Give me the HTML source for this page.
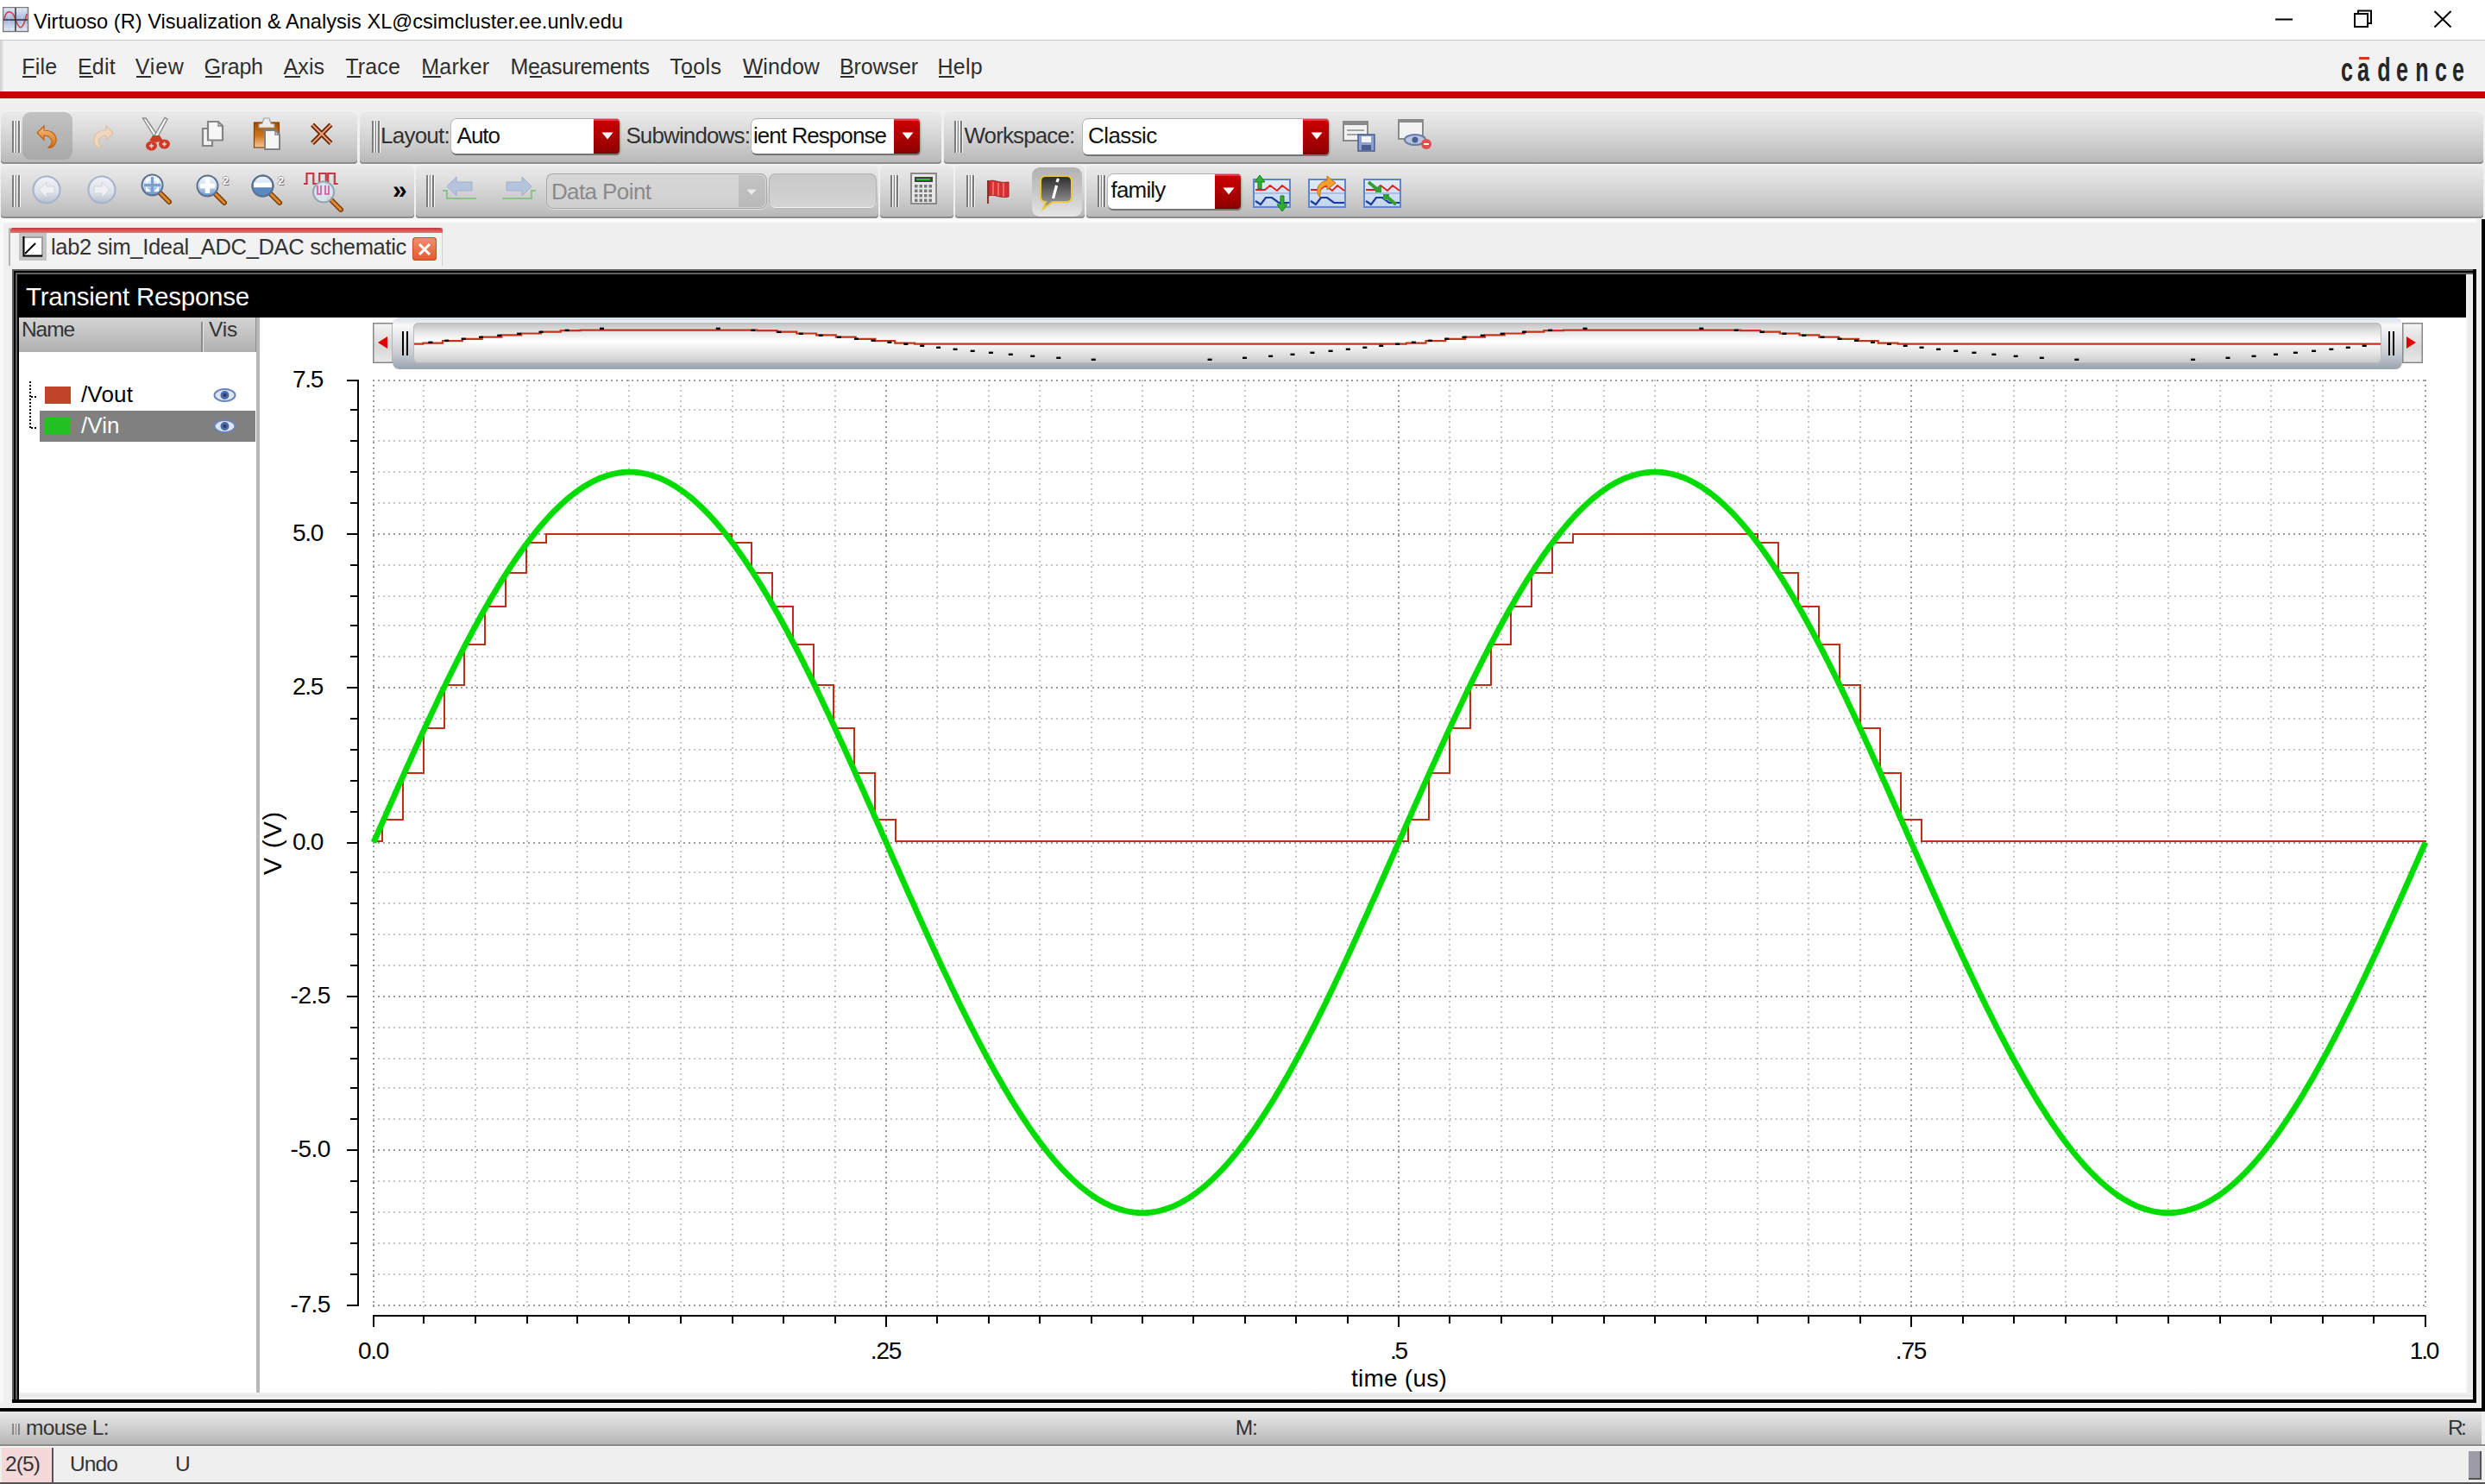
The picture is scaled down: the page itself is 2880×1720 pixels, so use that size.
<!DOCTYPE html><html><head><meta charset="utf-8"><style>
html,body{margin:0;padding:0;width:2880px;height:1720px;overflow:hidden;background:#f0f0f0;position:relative}
.t{position:absolute;font-family:"Liberation Sans",sans-serif;line-height:1;white-space:pre}
</style></head><body>
<div style="position:absolute;left:0px;top:0px;width:2880px;height:46px;background:#fff"></div>
<div style="position:absolute;left:0px;top:46px;width:2880px;height:1px;background:#c9c9c9"></div>
<svg style="position:absolute;left:3px;top:8px" width="31" height="30" viewBox="0 0 31 30">
<defs><linearGradient id="ig" x1="0" y1="0" x2="0" y2="1"><stop offset="0" stop-color="#e8eef8"/><stop offset="0.5" stop-color="#9db4dc"/><stop offset="1" stop-color="#e8eef8"/></linearGradient></defs>
<rect x="0.5" y="0.5" width="29" height="28" fill="url(#ig)" stroke="#7a7a7a" stroke-width="1.5"/>
<g stroke="#c8d2e4" stroke-width="1"><line x1="7.5" y1="1" x2="7.5" y2="28"/><line x1="22.5" y1="1" x2="22.5" y2="28"/><line x1="1" y1="8" x2="29" y2="8"/><line x1="1" y1="21" x2="29" y2="21"/></g>
<path d="M2 14 C4 3, 11 3, 15 14.5 S 23 30, 28 8" fill="none" stroke="#d04040" stroke-width="1.6"/>
<line x1="15" y1="1" x2="15" y2="28" stroke="#333" stroke-width="1.5"/><line x1="1" y1="15" x2="29" y2="15" stroke="#333" stroke-width="1.5"/>
</svg>
<div class="t" style="left:39.00px;top:14.32px;font-size:23.6px;letter-spacing:0.011px;color:#000;font-weight:normal;">Virtuoso (R) Visualization &amp; Analysis XL@csimcluster.ee.unlv.edu</div>
<svg style="position:absolute;left:2630px;top:8px" width="220" height="30" viewBox="0 0 220 30">
<line x1="7" y1="14.5" x2="27" y2="14.5" stroke="#000" stroke-width="2"/>
<rect x="99" y="8" width="15" height="15" fill="none" stroke="#000" stroke-width="2"/>
<path d="M103 8 V4.5 H118 V19 H114" fill="none" stroke="#000" stroke-width="2"/>
<path d="M191.5 5 L210.5 23.5 M210.5 5 L191.5 23.5" stroke="#000" stroke-width="2"/>
</svg>
<div style="position:absolute;left:0px;top:47px;width:2880px;height:59px;background:#f2f2f2"></div>
<div style="position:absolute;left:0px;top:47px;width:4px;height:59px;background:linear-gradient(to right,#cfcfcf,#e8e8e8)"></div>
<div class="t" style="left:25.20px;top:64.83px;font-size:25px;letter-spacing:0.226px;color:#2e2e2e;font-weight:normal;">File</div>
<div class="t" style="left:89.90px;top:64.83px;font-size:25px;letter-spacing:0.252px;color:#2e2e2e;font-weight:normal;">Edit</div>
<div class="t" style="left:156.80px;top:64.83px;font-size:25px;letter-spacing:0.787px;color:#2e2e2e;font-weight:normal;">View</div>
<div class="t" style="left:236.50px;top:64.83px;font-size:25px;letter-spacing:-0.257px;color:#2e2e2e;font-weight:normal;">Graph</div>
<div class="t" style="left:328.50px;top:64.83px;font-size:25px;letter-spacing:0.116px;color:#2e2e2e;font-weight:normal;">Axis</div>
<div class="t" style="left:400.20px;top:64.83px;font-size:25px;letter-spacing:0.163px;color:#2e2e2e;font-weight:normal;">Trace</div>
<div class="t" style="left:488.20px;top:64.83px;font-size:25px;letter-spacing:0.234px;color:#2e2e2e;font-weight:normal;">Marker</div>
<div class="t" style="left:591.50px;top:64.83px;font-size:25px;letter-spacing:-0.355px;color:#2e2e2e;font-weight:normal;">Measurements</div>
<div class="t" style="left:776.20px;top:64.83px;font-size:25px;letter-spacing:0.365px;color:#2e2e2e;font-weight:normal;">Tools</div>
<div class="t" style="left:860.70px;top:64.83px;font-size:25px;letter-spacing:0.063px;color:#2e2e2e;font-weight:normal;">Window</div>
<div class="t" style="left:973.00px;top:64.83px;font-size:25px;letter-spacing:-0.098px;color:#2e2e2e;font-weight:normal;">Browser</div>
<div class="t" style="left:1086.40px;top:64.83px;font-size:25px;letter-spacing:0.295px;color:#2e2e2e;font-weight:normal;">Help</div>
<div style="position:absolute;left:26px;top:88px;width:16px;height:2px;background:#2e2e2e"></div>
<div style="position:absolute;left:91.5px;top:88px;width:16px;height:2px;background:#2e2e2e"></div>
<div style="position:absolute;left:158px;top:88px;width:17px;height:2px;background:#2e2e2e"></div>
<div style="position:absolute;left:238px;top:88px;width:18px;height:2px;background:#2e2e2e"></div>
<div style="position:absolute;left:330px;top:88px;width:18px;height:2px;background:#2e2e2e"></div>
<div style="position:absolute;left:402px;top:88px;width:16px;height:2px;background:#2e2e2e"></div>
<div style="position:absolute;left:490px;top:88px;width:21px;height:2px;background:#2e2e2e"></div>
<div style="position:absolute;left:614px;top:88px;width:14px;height:2px;background:#2e2e2e"></div>
<div style="position:absolute;left:792px;top:88px;width:14px;height:2px;background:#2e2e2e"></div>
<div style="position:absolute;left:862px;top:88px;width:22px;height:2px;background:#2e2e2e"></div>
<div style="position:absolute;left:974px;top:88px;width:16px;height:2px;background:#2e2e2e"></div>
<div style="position:absolute;left:1088px;top:88px;width:18px;height:2px;background:#2e2e2e"></div>
<div class="t" style="left:2699.9px;top:61.8px;width:40px;text-align:center;font-size:38px;font-weight:bold;color:#262626;transform:scaleX(0.66)">c</div>
<div class="t" style="left:2719.2px;top:61.8px;width:40px;text-align:center;font-size:38px;font-weight:bold;color:#262626;transform:scaleX(0.66)">a</div>
<div class="t" style="left:2742.7px;top:61.8px;width:40px;text-align:center;font-size:38px;font-weight:bold;color:#262626;transform:scaleX(0.66)">d</div>
<div class="t" style="left:2764.1px;top:61.8px;width:40px;text-align:center;font-size:38px;font-weight:bold;color:#262626;transform:scaleX(0.66)">e</div>
<div class="t" style="left:2787.2px;top:61.8px;width:40px;text-align:center;font-size:38px;font-weight:bold;color:#262626;transform:scaleX(0.66)">n</div>
<div class="t" style="left:2809.2px;top:61.8px;width:40px;text-align:center;font-size:38px;font-weight:bold;color:#262626;transform:scaleX(0.66)">c</div>
<div class="t" style="left:2829.2px;top:61.8px;width:40px;text-align:center;font-size:38px;font-weight:bold;color:#262626;transform:scaleX(0.66)">e</div>
<div style="position:absolute;left:2734px;top:66px;width:12px;height:3px;background:#e03030"></div>
<div style="position:absolute;left:0px;top:106px;width:2880px;height:8px;background:#c80000"></div>
<div style="position:absolute;left:0px;top:114px;width:2880px;height:14px;background:#f0f0f0"></div>
<div style="position:absolute;left:1px;top:128px;width:413px;height:62px;background:linear-gradient(to bottom,#ececec 0%,#dcdcdc 35%,#c6c6c6 75%,#b6b6b6 100%);border-radius:7px 7px 4px 4px;box-shadow:inset 0 -2px 0 #8c8c8c, inset 0 1px 0 #f4f4f4;"></div>
<div style="position:absolute;left:417px;top:128px;width:674px;height:62px;background:linear-gradient(to bottom,#ececec 0%,#dcdcdc 35%,#c6c6c6 75%,#b6b6b6 100%);border-radius:7px 7px 4px 4px;box-shadow:inset 0 -2px 0 #8c8c8c, inset 0 1px 0 #f4f4f4;"></div>
<div style="position:absolute;left:1094px;top:128px;width:1784px;height:62px;background:linear-gradient(to bottom,#ececec 0%,#dcdcdc 35%,#c6c6c6 75%,#b6b6b6 100%);border-radius:7px 7px 4px 4px;box-shadow:inset 0 -2px 0 #8c8c8c, inset 0 1px 0 #f4f4f4;"></div>
<div style="position:absolute;left:1px;top:190px;width:479px;height:63px;background:linear-gradient(to bottom,#ececec 0%,#dcdcdc 35%,#c6c6c6 75%,#b6b6b6 100%);border-radius:7px 7px 4px 4px;box-shadow:inset 0 -2px 0 #8c8c8c, inset 0 1px 0 #f4f4f4;"></div>
<div style="position:absolute;left:482px;top:190px;width:536px;height:63px;background:linear-gradient(to bottom,#ececec 0%,#dcdcdc 35%,#c6c6c6 75%,#b6b6b6 100%);border-radius:7px 7px 4px 4px;box-shadow:inset 0 -2px 0 #8c8c8c, inset 0 1px 0 #f4f4f4;"></div>
<div style="position:absolute;left:1020px;top:190px;width:85px;height:63px;background:linear-gradient(to bottom,#ececec 0%,#dcdcdc 35%,#c6c6c6 75%,#b6b6b6 100%);border-radius:7px 7px 4px 4px;box-shadow:inset 0 -2px 0 #8c8c8c, inset 0 1px 0 #f4f4f4;"></div>
<div style="position:absolute;left:1107px;top:190px;width:150px;height:63px;background:linear-gradient(to bottom,#ececec 0%,#dcdcdc 35%,#c6c6c6 75%,#b6b6b6 100%);border-radius:7px 7px 4px 4px;box-shadow:inset 0 -2px 0 #8c8c8c, inset 0 1px 0 #f4f4f4;"></div>
<div style="position:absolute;left:1259px;top:190px;width:1619px;height:63px;background:linear-gradient(to bottom,#ececec 0%,#dcdcdc 35%,#c6c6c6 75%,#b6b6b6 100%);border-radius:7px 7px 4px 4px;box-shadow:inset 0 -2px 0 #8c8c8c, inset 0 1px 0 #f4f4f4;"></div>
<div style="position:absolute;left:0px;top:253px;width:2880px;height:5px;background:#fbfbfb"></div>
<div style="position:absolute;left:0px;top:258px;width:2880px;height:54px;background:#efefef"></div>
<div style="position:absolute;left:2876px;top:254px;width:4px;height:1382px;background:#000"></div>
<div style="position:absolute;left:14.0px;top:140px;width:1.6px;height:37px;background:#7c7c7c"></div><div style="position:absolute;left:15.6px;top:140px;width:1px;height:37px;background:#fafafa"></div><div style="position:absolute;left:17.5px;top:140px;width:1.6px;height:37px;background:#7c7c7c"></div><div style="position:absolute;left:19.1px;top:140px;width:1px;height:37px;background:#fafafa"></div><div style="position:absolute;left:21.0px;top:140px;width:1.6px;height:37px;background:#7c7c7c"></div><div style="position:absolute;left:22.6px;top:140px;width:1px;height:37px;background:#fafafa"></div>
<div style="position:absolute;left:431.0px;top:140px;width:1.6px;height:37px;background:#7c7c7c"></div><div style="position:absolute;left:432.6px;top:140px;width:1px;height:37px;background:#fafafa"></div><div style="position:absolute;left:434.5px;top:140px;width:1.6px;height:37px;background:#7c7c7c"></div><div style="position:absolute;left:436.1px;top:140px;width:1px;height:37px;background:#fafafa"></div><div style="position:absolute;left:438.0px;top:140px;width:1.6px;height:37px;background:#7c7c7c"></div><div style="position:absolute;left:439.6px;top:140px;width:1px;height:37px;background:#fafafa"></div>
<div style="position:absolute;left:1106.0px;top:140px;width:1.6px;height:37px;background:#7c7c7c"></div><div style="position:absolute;left:1107.6px;top:140px;width:1px;height:37px;background:#fafafa"></div><div style="position:absolute;left:1109.5px;top:140px;width:1.6px;height:37px;background:#7c7c7c"></div><div style="position:absolute;left:1111.1px;top:140px;width:1px;height:37px;background:#fafafa"></div><div style="position:absolute;left:1113.0px;top:140px;width:1.6px;height:37px;background:#7c7c7c"></div><div style="position:absolute;left:1114.6px;top:140px;width:1px;height:37px;background:#fafafa"></div>
<div style="position:absolute;left:14.0px;top:203px;width:1.6px;height:37px;background:#7c7c7c"></div><div style="position:absolute;left:15.6px;top:203px;width:1px;height:37px;background:#fafafa"></div><div style="position:absolute;left:17.5px;top:203px;width:1.6px;height:37px;background:#7c7c7c"></div><div style="position:absolute;left:19.1px;top:203px;width:1px;height:37px;background:#fafafa"></div><div style="position:absolute;left:21.0px;top:203px;width:1.6px;height:37px;background:#7c7c7c"></div><div style="position:absolute;left:22.6px;top:203px;width:1px;height:37px;background:#fafafa"></div>
<div style="position:absolute;left:494.0px;top:203px;width:1.6px;height:37px;background:#7c7c7c"></div><div style="position:absolute;left:495.6px;top:203px;width:1px;height:37px;background:#fafafa"></div><div style="position:absolute;left:497.5px;top:203px;width:1.6px;height:37px;background:#7c7c7c"></div><div style="position:absolute;left:499.1px;top:203px;width:1px;height:37px;background:#fafafa"></div><div style="position:absolute;left:501.0px;top:203px;width:1.6px;height:37px;background:#7c7c7c"></div><div style="position:absolute;left:502.6px;top:203px;width:1px;height:37px;background:#fafafa"></div>
<div style="position:absolute;left:1032.0px;top:203px;width:1.6px;height:37px;background:#7c7c7c"></div><div style="position:absolute;left:1033.6px;top:203px;width:1px;height:37px;background:#fafafa"></div><div style="position:absolute;left:1035.5px;top:203px;width:1.6px;height:37px;background:#7c7c7c"></div><div style="position:absolute;left:1037.1px;top:203px;width:1px;height:37px;background:#fafafa"></div><div style="position:absolute;left:1039.0px;top:203px;width:1.6px;height:37px;background:#7c7c7c"></div><div style="position:absolute;left:1040.6px;top:203px;width:1px;height:37px;background:#fafafa"></div>
<div style="position:absolute;left:1120.0px;top:203px;width:1.6px;height:37px;background:#7c7c7c"></div><div style="position:absolute;left:1121.6px;top:203px;width:1px;height:37px;background:#fafafa"></div><div style="position:absolute;left:1123.5px;top:203px;width:1.6px;height:37px;background:#7c7c7c"></div><div style="position:absolute;left:1125.1px;top:203px;width:1px;height:37px;background:#fafafa"></div><div style="position:absolute;left:1127.0px;top:203px;width:1.6px;height:37px;background:#7c7c7c"></div><div style="position:absolute;left:1128.6px;top:203px;width:1px;height:37px;background:#fafafa"></div>
<div style="position:absolute;left:1272.0px;top:203px;width:1.6px;height:37px;background:#7c7c7c"></div><div style="position:absolute;left:1273.6px;top:203px;width:1px;height:37px;background:#fafafa"></div><div style="position:absolute;left:1275.5px;top:203px;width:1.6px;height:37px;background:#7c7c7c"></div><div style="position:absolute;left:1277.1px;top:203px;width:1px;height:37px;background:#fafafa"></div><div style="position:absolute;left:1279.0px;top:203px;width:1.6px;height:37px;background:#7c7c7c"></div><div style="position:absolute;left:1280.6px;top:203px;width:1px;height:37px;background:#fafafa"></div>
<div style="position:absolute;left:26px;top:130px;width:58px;height:55px;background:linear-gradient(#c2c2c2,#a9a9a9);border-radius:9px;"></div>
<div style="position:absolute;left:1196px;top:194px;width:58px;height:57px;background:linear-gradient(#b2b2b2,#c8c8c8 50%,#e6e6e6);border-radius:9px;"></div>
<svg style="position:absolute;left:40px;top:142px;overflow:visible" width="30" height="32" viewBox="0 0 30 32"><defs><linearGradient id="ug" x1="0" y1="0" x2="0" y2="1"><stop offset="0" stop-color="#f8c080"/><stop offset="1" stop-color="#d06a10"/></linearGradient></defs>
<path d="M3 12 L11 4 L11 9 C20 9 26 14 25 22 C24 27 20 30 16 29 C20 26 21 22 19 19 C17 16 14 15 11 15 L11 20 Z" fill="url(#ug)" stroke="#c06010" stroke-width="1.2"/></svg>
<svg style="position:absolute;left:104px;top:142px;overflow:visible" width="30" height="32" viewBox="0 0 30 32"><path d="M27 12 L19 4 L19 9 C10 9 4 14 5 22 C6 27 10 30 14 29 C10 26 9 22 11 19 C13 16 16 15 19 15 L19 20 Z" fill="#f0d8c0" stroke="#e0c0a0" stroke-width="1.2"/></svg>
<svg style="position:absolute;left:163px;top:135px;overflow:visible" width="36" height="42" viewBox="0 0 36 42"><path d="M2.5 2 L6 2 L21 24 L18 27 Z" fill="#f6f6f6" stroke="#8c8c8c" stroke-width="1.4"/>
<path d="M28 1.5 L31 3 L18 27 L15 24 Z" fill="#f6f6f6" stroke="#8c8c8c" stroke-width="1.4"/>
<path d="M14 22 L22 22 L26 28 L18 30 L10 28 Z" fill="#d03a28"/>
<ellipse cx="12.5" cy="34" rx="6.5" ry="5.5" fill="#d03a28"/><ellipse cx="27.5" cy="32" rx="6.5" ry="5.5" fill="#d03a28"/>
<path d="M12.5 31.5 V36.5 M10 34 H15 M27.5 29.5 V34.5 M25 32 H30" stroke="#e8d8d8" stroke-width="1.6"/></svg>
<svg style="position:absolute;left:232px;top:138px;overflow:visible" width="30" height="36" viewBox="0 0 30 36"><path d="M3 11 H14 V31 H3 Z" fill="#f2f2f2" stroke="#858585" stroke-width="2.2"/>
<path d="M9 3 H21 L26 8 V24.5 H9 Z" fill="#f6f6f6" stroke="#858585" stroke-width="2.2"/><path d="M21 3 V8 H26" fill="none" stroke="#858585" stroke-width="1.5"/></svg>
<svg style="position:absolute;left:292px;top:135px;overflow:visible" width="36" height="42" viewBox="0 0 36 42"><defs><linearGradient id="pg" x1="0" y1="0" x2="0" y2="1"><stop offset="0" stop-color="#a04c00"/><stop offset="0.55" stop-color="#d07a20"/><stop offset="1" stop-color="#f4c89a"/></linearGradient></defs>
<rect x="2.5" y="7" width="29" height="29" fill="url(#pg)" stroke="#8a4000" stroke-width="1.2"/>
<path d="M8 13 H26 V9 L22 8 L20 2 H14 L12 8 L8 9 Z" fill="#ececec" stroke="#a0a0a0" stroke-width="1.2"/>
<path d="M15 16 H27 L32 21 V38 H15 Z" fill="#f6f6f6" stroke="#828282" stroke-width="2"/><path d="M27 16 V21 H32" fill="none" stroke="#828282" stroke-width="1.4"/></svg>
<svg style="position:absolute;left:358px;top:141px;overflow:visible" width="30" height="28" viewBox="0 0 30 28"><path d="M4 3.5 L25.5 25 M25.5 3.5 L4 25" stroke="#6a2200" stroke-width="5.5"/><path d="M4 3.5 L25.5 25 M25.5 3.5 L4 25" stroke="#eaa47a" stroke-width="2"/></svg>
<div style="position:absolute;left:523px;top:138px;width:195px;height:40px;background:#fff;border-radius:6px 4px 4px 6px;box-shadow:0 -1px 0 #b0b0b0, -1px 0 0 #b8b8b8, 0 2px 0 #747474, 1px 1px 2px rgba(0,0,0,.3);"></div><div style="position:absolute;left:688px;top:138px;width:30px;height:40px;background:linear-gradient(#cc0000,#b00000 50%,#940000 92%,#700000);border-radius:0 4px 4px 0;box-shadow:inset 0 2px 0 #d84040;"></div><svg style="position:absolute;left:697px;top:153px;overflow:visible" width="14" height="9" viewBox="0 0 14 9"><path d="M0.5 0.5 H13.5 L7 8.5 Z" fill="#fff"/></svg>
<div style="position:absolute;left:871px;top:138px;width:195px;height:40px;background:#fff;border-radius:6px 4px 4px 6px;box-shadow:0 -1px 0 #b0b0b0, -1px 0 0 #b8b8b8, 0 2px 0 #747474, 1px 1px 2px rgba(0,0,0,.3);"></div><div style="position:absolute;left:1036px;top:138px;width:30px;height:40px;background:linear-gradient(#cc0000,#b00000 50%,#940000 92%,#700000);border-radius:0 4px 4px 0;box-shadow:inset 0 2px 0 #d84040;"></div><svg style="position:absolute;left:1045px;top:153px;overflow:visible" width="14" height="9" viewBox="0 0 14 9"><path d="M0.5 0.5 H13.5 L7 8.5 Z" fill="#fff"/></svg>
<div style="position:absolute;left:1255px;top:138px;width:285px;height:41px;background:#fff;border-radius:6px 4px 4px 6px;box-shadow:0 -1px 0 #b0b0b0, -1px 0 0 #b8b8b8, 0 2px 0 #747474, 1px 1px 2px rgba(0,0,0,.3);"></div><div style="position:absolute;left:1510px;top:138px;width:30px;height:41px;background:linear-gradient(#cc0000,#b00000 50%,#940000 92%,#700000);border-radius:0 4px 4px 0;box-shadow:inset 0 2px 0 #d84040;"></div><svg style="position:absolute;left:1519px;top:153px;overflow:visible" width="14" height="9" viewBox="0 0 14 9"><path d="M0.5 0.5 H13.5 L7 8.5 Z" fill="#fff"/></svg>
<div style="position:absolute;left:1284px;top:202px;width:154px;height:40px;background:#fff;border-radius:6px 4px 4px 6px;box-shadow:0 -1px 0 #b0b0b0, -1px 0 0 #b8b8b8, 0 2px 0 #747474, 1px 1px 2px rgba(0,0,0,.3);"></div><div style="position:absolute;left:1408px;top:202px;width:30px;height:40px;background:linear-gradient(#cc0000,#b00000 50%,#940000 92%,#700000);border-radius:0 4px 4px 0;box-shadow:inset 0 2px 0 #d84040;"></div><svg style="position:absolute;left:1417px;top:217px;overflow:visible" width="14" height="9" viewBox="0 0 14 9"><path d="M0.5 0.5 H13.5 L7 8.5 Z" fill="#fff"/></svg>
<div class="t" style="left:441.00px;top:144.29px;font-size:26px;letter-spacing:-0.757px;color:#303030;font-weight:normal;">Layout:</div>
<div class="t" style="left:529.60px;top:144.29px;font-size:26px;letter-spacing:-1.050px;color:#111;font-weight:normal;">Auto</div>
<div class="t" style="left:725.40px;top:144.29px;font-size:26px;letter-spacing:-0.873px;color:#303030;font-weight:normal;">Subwindows:</div>
<div class="t" style="left:873.00px;top:144.29px;font-size:26px;letter-spacing:-0.941px;color:#111;font-weight:normal;">ient Response</div>
<div class="t" style="left:1117.40px;top:143.99px;font-size:26px;letter-spacing:-0.880px;color:#303030;font-weight:normal;">Workspace:</div>
<div class="t" style="left:1261.00px;top:143.99px;font-size:26px;letter-spacing:-0.585px;color:#111;font-weight:normal;">Classic</div>
<div class="t" style="left:1287.60px;top:207.49px;font-size:26px;letter-spacing:-0.851px;color:#111;font-weight:normal;">family</div>
<svg style="position:absolute;left:1556px;top:140px;overflow:visible" width="40" height="36" viewBox="0 0 40 36"><rect x="1" y="1" width="28" height="22" fill="#f2f2f2" stroke="#8a8a8a" stroke-width="2"/><rect x="1" y="1" width="28" height="4" fill="#8a8a8a"/>
<line x1="5" y1="11" x2="25" y2="11" stroke="#8a8a8a" stroke-width="1.5"/><line x1="5" y1="16" x2="25" y2="16" stroke="#8a8a8a" stroke-width="1.5"/>
<rect x="18" y="16" width="19" height="19" fill="#8aa0d0" stroke="#4a5e90" stroke-width="1.5"/><rect x="22" y="18" width="11" height="7" fill="#f4f4f4"/><rect x="22" y="28" width="11" height="6" fill="#4a5e90"/></svg>
<svg style="position:absolute;left:1620px;top:137px;overflow:visible" width="42" height="40" viewBox="0 0 42 40"><rect x="1" y="2" width="28" height="22" fill="#f2f2f2" stroke="#8a8a8a" stroke-width="2"/><rect x="1" y="1" width="28" height="4" fill="#8a8a8a"/>
<ellipse cx="20" cy="25" rx="12" ry="6" fill="#b8c4dc" stroke="#6a7ca8" stroke-width="2"/><circle cx="20" cy="25" r="3.5" fill="#4a5e90"/>
<circle cx="33" cy="30" r="6" fill="#e05050"/><rect x="30" y="29" width="6" height="2" fill="#fff"/></svg>
<svg style="position:absolute;left:36px;top:202px;overflow:visible" width="36" height="36" viewBox="0 0 36 36"><defs><linearGradient id="cg54" x1="0" y1="0" x2="0" y2="1"><stop offset="0" stop-color="#f0f2f6"/><stop offset="0.6" stop-color="#dde2ea"/><stop offset="1" stop-color="#b4bccc"/></linearGradient></defs>
<circle cx="18" cy="18" r="15.5" fill="url(#cg54)" stroke="#a8b4cc" stroke-width="2.2"/><path transform="translate(18 18)" d="M-9 0 L0 -9 L0 -4 L9 -4 L9 4 L0 4 L0 9 Z" fill="#eef0f4" stroke="#d0d4dc" stroke-width="1"/></svg>
<svg style="position:absolute;left:100px;top:202px;overflow:visible" width="36" height="36" viewBox="0 0 36 36"><defs><linearGradient id="cg118" x1="0" y1="0" x2="0" y2="1"><stop offset="0" stop-color="#f0f2f6"/><stop offset="0.6" stop-color="#dde2ea"/><stop offset="1" stop-color="#b4bccc"/></linearGradient></defs>
<circle cx="18" cy="18" r="15.5" fill="url(#cg118)" stroke="#a8b4cc" stroke-width="2.2"/><path transform="translate(18 18)" d="M9 0 L0 -9 L0 -4 L-9 -4 L-9 4 L0 4 L0 9 Z" fill="#eef0f4" stroke="#d0d4dc" stroke-width="1"/></svg>
<svg style="position:absolute;left:163px;top:201px;overflow:visible" width="44" height="44" viewBox="0 0 44 44"><defs><linearGradient id="mg163" x1="0" y1="0" x2="0" y2="1"><stop offset="0" stop-color="#f4f8fc"/><stop offset="0.5" stop-color="#c8dcf0"/><stop offset="1" stop-color="#6890c4"/></linearGradient></defs>
<line x1="21" y1="21" x2="33" y2="33" stroke="#7a3a08" stroke-width="6" stroke-linecap="round"/><line x1="21" y1="21" x2="33" y2="33" stroke="#e08a30" stroke-width="3" stroke-linecap="round"/>
<circle cx="13.5" cy="13.5" r="12" fill="url(#mg163)" stroke="#5a7090" stroke-width="2"/><path d="M13.5 4 V23 M4 13.5 H23" stroke="#7aa0d0" stroke-width="3"/><path d="M6 6 L12 6 L6 12 Z M21 6 L21 12 L15 6 Z M6 21 L6 15 L12 21 Z M21 21 L15 21 L21 15 Z" fill="#fff"/></svg>
<svg style="position:absolute;left:227px;top:202px;overflow:visible" width="44" height="44" viewBox="0 0 44 44"><defs><linearGradient id="mg227" x1="0" y1="0" x2="0" y2="1"><stop offset="0" stop-color="#f4f8fc"/><stop offset="0.5" stop-color="#c8dcf0"/><stop offset="1" stop-color="#6890c4"/></linearGradient></defs>
<line x1="21" y1="21" x2="33" y2="33" stroke="#7a3a08" stroke-width="6" stroke-linecap="round"/><line x1="21" y1="21" x2="33" y2="33" stroke="#e08a30" stroke-width="3" stroke-linecap="round"/>
<circle cx="13.5" cy="13.5" r="12" fill="url(#mg227)" stroke="#5a7090" stroke-width="2"/><path d="M13.5 5 V22 M5 13.5 H22" stroke="#fff" stroke-width="5.5"/></svg>
<svg style="position:absolute;left:291px;top:202px;overflow:visible" width="44" height="44" viewBox="0 0 44 44"><defs><linearGradient id="mg291" x1="0" y1="0" x2="0" y2="1"><stop offset="0" stop-color="#f4f8fc"/><stop offset="0.5" stop-color="#c8dcf0"/><stop offset="1" stop-color="#6890c4"/></linearGradient></defs>
<line x1="21" y1="21" x2="33" y2="33" stroke="#7a3a08" stroke-width="6" stroke-linecap="round"/><line x1="21" y1="21" x2="33" y2="33" stroke="#e08a30" stroke-width="3" stroke-linecap="round"/>
<circle cx="13.5" cy="13.5" r="12" fill="url(#mg291)" stroke="#5a7090" stroke-width="2"/><path d="M2.5 13.5 A11 11 0 0 0 24.5 13.5 Z" fill="#5a88c0"/><path d="M3 12.5 H24" stroke="#fff" stroke-width="5.5"/><circle cx="13.5" cy="13.5" r="12" fill="none" stroke="#5a7090" stroke-width="2"/></svg>
<div class="t" style="left:258px;top:203px;font-size:13px;font-weight:bold;color:#fff;text-shadow:1px 1px 0 #777,-1px 0 0 #999,0 -1px 0 #999">2</div>
<div class="t" style="left:322px;top:203px;font-size:13px;font-weight:bold;color:#fff;text-shadow:1px 1px 0 #777,-1px 0 0 #999,0 -1px 0 #999">2</div>
<svg style="position:absolute;left:350px;top:198px;overflow:visible" width="50" height="50" viewBox="0 0 50 50"><path d="M2 15 H5.5 V3 H13.3 V15 H20.2 V3 H27.8 V15 H30.2 V3 H37.8 V15 H41.6" fill="none" stroke="#c03848" stroke-width="2.2"/>
<line x1="32" y1="32" x2="45" y2="45" stroke="#7a3a08" stroke-width="6" stroke-linecap="round"/><line x1="32" y1="32" x2="45" y2="45" stroke="#e08a30" stroke-width="3" stroke-linecap="round"/>
<circle cx="25" cy="24.5" r="12" fill="#d8e4ec" fill-opacity="0.9" stroke="#90a4b4" stroke-width="2"/><path d="M18 17 V27 H22 V17 M27 17 V27 H31 V17" fill="none" stroke="#d050a0" stroke-width="1.6"/></svg>
<div class="t" style="left:455.00px;top:204.60px;font-size:30px;letter-spacing:0.000px;color:#000;font-weight:normal;font-weight:bold;">»</div>
<svg style="position:absolute;left:512px;top:202px;overflow:visible" width="46" height="40" viewBox="0 0 46 40"><path d="M1 19 H6 V28 H40" fill="none" stroke="#8cc08c" stroke-width="2"/><path d="M6 14 L17 3 V9 H35 V19 H17 V25 Z" fill="#b4c4dc" stroke="#a0b0cc" stroke-width="1"/></svg>
<svg style="position:absolute;left:576px;top:202px;overflow:visible" width="46" height="40" viewBox="0 0 46 40"><path d="M45 19 H40 V28 H6" fill="none" stroke="#8cc08c" stroke-width="2"/><path d="M40 14 L29 3 V9 H11 V19 H29 V25 Z" fill="#b4c4dc" stroke="#a0b0cc" stroke-width="1"/></svg>
<div style="position:absolute;left:633px;top:201px;width:256px;height:41px;background:linear-gradient(#d8d8d8,#cfcfcf);border-radius:8px;box-shadow:inset 0 0 0 1px #a8a8a8, 0 1px 1px rgba(255,255,255,.6);"></div>
<div style="position:absolute;left:856px;top:203px;width:31px;height:37px;background:linear-gradient(#c4c4c4,#b8b8b8);border-radius:0 7px 7px 0;"></div>
<svg style="position:absolute;left:865px;top:219px;overflow:visible" width="12" height="8" viewBox="0 0 12 8"><path d="M0.5 0.5 H11.5 L6 7 Z" fill="#ececec"/></svg>
<div class="t" style="left:638.90px;top:208.59px;font-size:26px;letter-spacing:-0.591px;color:#8a8a8a;font-weight:normal;">Data Point</div>
<div style="position:absolute;left:891px;top:201px;width:125px;height:41px;background:linear-gradient(#c8c8c8,#d4d4d4);border-radius:8px;box-shadow:inset 0 0 0 1px #b4b4b4, inset 0 -2px 0 #f6f6f6;"></div>
<svg style="position:absolute;left:1055px;top:200px;overflow:visible" width="32" height="38" viewBox="0 0 32 38"><rect x="1" y="1" width="29" height="35" fill="#e8e8e8" stroke="#8a8a8a" stroke-width="2"/><rect x="5" y="5" width="21" height="6" fill="#404040"/><rect x="7" y="7" width="16" height="2" fill="#30c030"/>
<g fill="#7a7a7a"><rect x="5.0" y="14.0" width="3.5" height="3.5"/><rect x="5.0" y="19.5" width="3.5" height="3.5"/><rect x="5.0" y="25.0" width="3.5" height="3.5"/><rect x="5.0" y="30.5" width="3.5" height="3.5"/><rect x="10.5" y="14.0" width="3.5" height="3.5"/><rect x="10.5" y="19.5" width="3.5" height="3.5"/><rect x="10.5" y="25.0" width="3.5" height="3.5"/><rect x="10.5" y="30.5" width="3.5" height="3.5"/><rect x="16.0" y="14.0" width="3.5" height="3.5"/><rect x="16.0" y="19.5" width="3.5" height="3.5"/><rect x="16.0" y="25.0" width="3.5" height="3.5"/><rect x="16.0" y="30.5" width="3.5" height="3.5"/><rect x="21.5" y="14.0" width="3.5" height="3.5"/><rect x="21.5" y="19.5" width="3.5" height="3.5"/><rect x="21.5" y="25.0" width="3.5" height="3.5"/><rect x="21.5" y="30.5" width="3.5" height="3.5"/></g></svg>
<svg style="position:absolute;left:1143px;top:207px;overflow:visible" width="30" height="30" viewBox="0 0 30 30"><path d="M2 2 V29" stroke="#7a3a30" stroke-width="2"/><path d="M3 3 C9 0 14 6 26 4 V21 C14 23 9 17 3 20 Z" fill="#d83030" stroke="#a02020" stroke-width="1"/><path d="M8 4 V19 M14 5 V20 M20 5 V21" stroke="#f08080" stroke-width="1.5"/></svg>
<svg style="position:absolute;left:1204px;top:202px;overflow:visible" width="42" height="44" viewBox="0 0 42 44"><defs><linearGradient id="inf" x1="0" y1="0" x2="0" y2="1"><stop offset="0" stop-color="#2a2a2a"/><stop offset="1" stop-color="#a8a8a8"/></linearGradient></defs>
<path d="M8 2 H32 Q38 2 38 8 V26 Q38 32 32 32 H16 L5 40 L8 32 Q2 32 2 26 V8 Q2 2 8 2 Z" fill="url(#inf)" stroke="#e8c838" stroke-width="2"/>
<path d="M22.5 5 L21 9 M20.5 13 L16.5 28" stroke="#fff" stroke-width="3.2"/></svg>
<svg style="position:absolute;left:1452px;top:203px;overflow:visible" width="46" height="44" viewBox="0 0 46 44"><defs><linearGradient id="gg1452" x1="0" y1="0" x2="0" y2="1"><stop offset="0" stop-color="#e4ecf8"/><stop offset="1" stop-color="#c0d4f0"/></linearGradient></defs>
<rect x="1" y="5" width="42" height="32" fill="url(#gg1452)" stroke="#5a88d0" stroke-width="2"/><line x1="2" y1="21" x2="42" y2="21" stroke="#7aa0e0" stroke-width="1"/>
<path d="M3 30 L9 34 L15 26 L22 26 L30 32 L42 32" fill="none" stroke="#1a3a9a" stroke-width="2.2"/><path d="M3 17 L14 17 L20 12 L28 18 L34 12 L42 18" fill="none" stroke="#e02020" stroke-width="1.8"/><path d="M8 0 L2 8 H6 V16 H10 V8 H14 Z" fill="#30b030" stroke="#108010"/><path d="M34 42 L28 34 H32 V24 H36 V34 H40 Z" fill="#30b030" stroke="#108010"/></svg>
<svg style="position:absolute;left:1516px;top:203px;overflow:visible" width="46" height="44" viewBox="0 0 46 44"><defs><linearGradient id="gg1516" x1="0" y1="0" x2="0" y2="1"><stop offset="0" stop-color="#e4ecf8"/><stop offset="1" stop-color="#c0d4f0"/></linearGradient></defs>
<rect x="1" y="5" width="42" height="32" fill="url(#gg1516)" stroke="#5a88d0" stroke-width="2"/><line x1="2" y1="21" x2="42" y2="21" stroke="#7aa0e0" stroke-width="1"/>
<path d="M3 30 L9 34 L15 26 L22 26 L30 32 L42 32" fill="none" stroke="#1a3a9a" stroke-width="2.2"/><path d="M3 17 L14 17 L20 12 L28 18 L34 12 L42 18" fill="none" stroke="#e02020" stroke-width="1.8"/><path d="M14 26 C8 20 10 8 22 6 V1 L32 9 L22 17 V12 C16 12 13 18 14 26 Z" fill="#f0a030" stroke="#c07010" stroke-width="1"/></svg>
<svg style="position:absolute;left:1580px;top:203px;overflow:visible" width="46" height="44" viewBox="0 0 46 44"><defs><linearGradient id="gg1580" x1="0" y1="0" x2="0" y2="1"><stop offset="0" stop-color="#e4ecf8"/><stop offset="1" stop-color="#c0d4f0"/></linearGradient></defs>
<rect x="1" y="5" width="42" height="32" fill="url(#gg1580)" stroke="#5a88d0" stroke-width="2"/><line x1="2" y1="21" x2="42" y2="21" stroke="#7aa0e0" stroke-width="1"/>
<path d="M3 30 L9 34 L15 26 L22 26 L30 32 L42 32" fill="none" stroke="#1a3a9a" stroke-width="2.2"/><path d="M3 17 L14 17 L20 12 L28 18 L34 12 L42 18" fill="none" stroke="#e02020" stroke-width="1.8"/><path d="M6 8 L18 18 M14 18 H19 V13" stroke="#30a030" stroke-width="4" fill="none"/><path d="M38 34 L26 24 M30 24 H25 V29" stroke="#30a030" stroke-width="4" fill="none"/></svg>
<div style="position:absolute;left:0px;top:254px;width:4px;height:1382px;background:#f8f8f8"></div>
<div style="position:absolute;left:10px;top:264px;width:503px;height:44px;background:#f2f2f2;border-left:2px solid #b4b4b4;border-right:1px solid #d0d0d0;box-sizing:border-box;"></div>
<div style="position:absolute;left:12px;top:264px;width:501px;height:6px;background:linear-gradient(#c03838,#e27878);border-radius:3px 3px 0 0;"></div>
<div style="position:absolute;left:22px;top:270px;width:32px;height:32px;background:#c4c4c4"></div>
<svg style="position:absolute;left:26px;top:274px;overflow:visible" width="24" height="24" viewBox="0 0 24 24"><rect x="1" y="1" width="22" height="22" fill="#fff" stroke="#a0a0a0" stroke-width="2"/><path d="M1.5 0 V22.5 H23" fill="none" stroke="#000" stroke-width="2"/><path d="M3 20 L15 8" stroke="#000" stroke-width="2"/></svg>
<div class="t" style="left:59.00px;top:274.41px;font-size:25.5px;letter-spacing:-0.323px;color:#333;font-weight:normal;">lab2 sim_Ideal_ADC_DAC schematic</div>
<div style="position:absolute;left:478px;top:275px;width:28px;height:27px;background:linear-gradient(#f09070,#e05a30);border-radius:4px;box-shadow:inset 0 0 0 1px #c84a20;"></div>
<svg style="position:absolute;left:484px;top:281px;overflow:visible" width="16" height="16" viewBox="0 0 16 16"><path d="M2 2 L14 14 M14 2 L2 14" stroke="#fff" stroke-width="3"/></svg>
<div style="position:absolute;left:14px;top:312px;width:2856px;height:1314px;background:#000"></div>
<div style="position:absolute;left:14px;top:312px;width:2852px;height:2px;background:#606060"></div>
<div style="position:absolute;left:14px;top:312px;width:2px;height:1310px;background:#606060"></div>
<div style="position:absolute;left:18px;top:316px;width:2848px;height:2px;background:#606060"></div>
<div style="position:absolute;left:18px;top:316px;width:2px;height:1306px;background:#606060"></div>
<div style="position:absolute;left:2858px;top:318px;width:8px;height:1304px;background:linear-gradient(to right,#f4f4f4,#e8e8e8 60%,#f8f8f8)"></div>
<div style="position:absolute;left:22px;top:1614px;width:2844px;height:8px;background:linear-gradient(#f0f0f0,#e8e8e8 60%,#f8f8f8)"></div>
<div style="position:absolute;left:2870px;top:254px;width:6px;height:1378px;background:#f0f0f0"></div>
<div style="position:absolute;left:0px;top:1626px;width:2876px;height:6px;background:#f0f0f0"></div>
<div style="position:absolute;left:0px;top:1632px;width:2880px;height:4px;background:#000"></div>
<div style="position:absolute;left:20px;top:318px;width:2838px;height:50px;background:#000"></div>
<div class="t" style="left:30.00px;top:328.92px;font-size:29.5px;letter-spacing:-0.218px;color:#fff;font-weight:normal;">Transient Response</div>
<div style="position:absolute;left:22px;top:368px;width:2836px;height:1246px;background:#fff"></div>
<div style="position:absolute;left:22px;top:368px;width:276px;height:40px;background:linear-gradient(#d4d4d4,#b0b0b0)"></div>
<div style="position:absolute;left:233px;top:373px;width:2px;height:35px;background:#8a8a8a"></div>
<div style="position:absolute;left:235px;top:373px;width:1px;height:35px;background:#e8e8e8"></div>
<div style="position:absolute;left:296px;top:368px;width:2px;height:40px;background:#909090"></div>
<div style="position:absolute;left:297px;top:368px;width:4px;height:1246px;background:#b8b8b8"></div>
<div class="t" style="left:25.00px;top:370.26px;font-size:24.5px;letter-spacing:-1.090px;color:#333;font-weight:normal;">Name</div>
<div class="t" style="left:242.00px;top:370.26px;font-size:24.5px;letter-spacing:-0.198px;color:#333;font-weight:normal;">Vis</div>
<div style="position:absolute;left:34px;top:442px;width:2px;height:54px;background:repeating-linear-gradient(#000 0 2px,transparent 2px 4px)"></div>
<div style="position:absolute;left:36px;top:459px;width:8px;height:2px;background:repeating-linear-gradient(to right,#000 0 2px,transparent 2px 4px)"></div>
<div style="position:absolute;left:36px;top:495px;width:8px;height:2px;background:repeating-linear-gradient(to right,#000 0 2px,transparent 2px 4px)"></div>
<div style="position:absolute;left:52px;top:448px;width:30px;height:20px;background:#c04428"></div>
<div class="t" style="left:94.00px;top:443.99px;font-size:26px;letter-spacing:0.144px;color:#000;font-weight:normal;">/Vout</div>
<div style="position:absolute;left:46px;top:476px;width:250px;height:36px;background:#808080"></div>
<div style="position:absolute;left:52px;top:484px;width:30px;height:20px;background:#22c022"></div>
<div class="t" style="left:94.00px;top:479.99px;font-size:26px;letter-spacing:0.039px;color:#f4ffff;font-weight:normal;">/Vin</div>
<svg style="position:absolute;left:247px;top:448px;overflow:visible" width="28" height="20" viewBox="0 0 28 20"><ellipse cx="13.5" cy="10" rx="12" ry="7" fill="#dfe6f2" stroke="#6a84b8" stroke-width="2"/><circle cx="13.5" cy="10" r="5" fill="#4a6aa8"/><circle cx="13.5" cy="10" r="2" fill="#2a3a68"/></svg>
<svg style="position:absolute;left:247px;top:484px;overflow:visible" width="28" height="20" viewBox="0 0 28 20"><ellipse cx="13.5" cy="10" rx="12" ry="7" fill="#dfe6f2" stroke="#6a84b8" stroke-width="2"/><circle cx="13.5" cy="10" r="5" fill="#4a6aa8"/><circle cx="13.5" cy="10" r="2" fill="#2a3a68"/></svg>
<svg style="position:absolute;left:0;top:0" width="2880" height="1720" shape-rendering="crispEdges"><line x1="432" y1="475" x2="2813" y2="475" stroke="#c6c6c6" stroke-width="2" stroke-dasharray="2 4"/><line x1="432" y1="511" x2="2813" y2="511" stroke="#c6c6c6" stroke-width="2" stroke-dasharray="2 4"/><line x1="432" y1="547" x2="2813" y2="547" stroke="#c6c6c6" stroke-width="2" stroke-dasharray="2 4"/><line x1="432" y1="583" x2="2813" y2="583" stroke="#c6c6c6" stroke-width="2" stroke-dasharray="2 4"/><line x1="432" y1="655" x2="2813" y2="655" stroke="#c6c6c6" stroke-width="2" stroke-dasharray="2 4"/><line x1="432" y1="691" x2="2813" y2="691" stroke="#c6c6c6" stroke-width="2" stroke-dasharray="2 4"/><line x1="432" y1="725" x2="2813" y2="725" stroke="#c6c6c6" stroke-width="2" stroke-dasharray="2 4"/><line x1="432" y1="761" x2="2813" y2="761" stroke="#c6c6c6" stroke-width="2" stroke-dasharray="2 4"/><line x1="432" y1="833" x2="2813" y2="833" stroke="#c6c6c6" stroke-width="2" stroke-dasharray="2 4"/><line x1="432" y1="869" x2="2813" y2="869" stroke="#c6c6c6" stroke-width="2" stroke-dasharray="2 4"/><line x1="432" y1="905" x2="2813" y2="905" stroke="#c6c6c6" stroke-width="2" stroke-dasharray="2 4"/><line x1="432" y1="941" x2="2813" y2="941" stroke="#c6c6c6" stroke-width="2" stroke-dasharray="2 4"/><line x1="432" y1="1011" x2="2813" y2="1011" stroke="#c6c6c6" stroke-width="2" stroke-dasharray="2 4"/><line x1="432" y1="1047" x2="2813" y2="1047" stroke="#c6c6c6" stroke-width="2" stroke-dasharray="2 4"/><line x1="432" y1="1083" x2="2813" y2="1083" stroke="#c6c6c6" stroke-width="2" stroke-dasharray="2 4"/><line x1="432" y1="1119" x2="2813" y2="1119" stroke="#c6c6c6" stroke-width="2" stroke-dasharray="2 4"/><line x1="432" y1="1191" x2="2813" y2="1191" stroke="#c6c6c6" stroke-width="2" stroke-dasharray="2 4"/><line x1="432" y1="1227" x2="2813" y2="1227" stroke="#c6c6c6" stroke-width="2" stroke-dasharray="2 4"/><line x1="432" y1="1261" x2="2813" y2="1261" stroke="#c6c6c6" stroke-width="2" stroke-dasharray="2 4"/><line x1="432" y1="1297" x2="2813" y2="1297" stroke="#c6c6c6" stroke-width="2" stroke-dasharray="2 4"/><line x1="432" y1="1369" x2="2813" y2="1369" stroke="#c6c6c6" stroke-width="2" stroke-dasharray="2 4"/><line x1="432" y1="1405" x2="2813" y2="1405" stroke="#c6c6c6" stroke-width="2" stroke-dasharray="2 4"/><line x1="432" y1="1441" x2="2813" y2="1441" stroke="#c6c6c6" stroke-width="2" stroke-dasharray="2 4"/><line x1="432" y1="1477" x2="2813" y2="1477" stroke="#c6c6c6" stroke-width="2" stroke-dasharray="2 4"/><line x1="491" y1="440" x2="491" y2="1515" stroke="#c6c6c6" stroke-width="2" stroke-dasharray="2 4"/><line x1="551" y1="440" x2="551" y2="1515" stroke="#c6c6c6" stroke-width="2" stroke-dasharray="2 4"/><line x1="611" y1="440" x2="611" y2="1515" stroke="#c6c6c6" stroke-width="2" stroke-dasharray="2 4"/><line x1="669" y1="440" x2="669" y2="1515" stroke="#c6c6c6" stroke-width="2" stroke-dasharray="2 4"/><line x1="729" y1="440" x2="729" y2="1515" stroke="#c6c6c6" stroke-width="2" stroke-dasharray="2 4"/><line x1="789" y1="440" x2="789" y2="1515" stroke="#c6c6c6" stroke-width="2" stroke-dasharray="2 4"/><line x1="849" y1="440" x2="849" y2="1515" stroke="#c6c6c6" stroke-width="2" stroke-dasharray="2 4"/><line x1="908" y1="440" x2="908" y2="1515" stroke="#c6c6c6" stroke-width="2" stroke-dasharray="2 4"/><line x1="968" y1="440" x2="968" y2="1515" stroke="#c6c6c6" stroke-width="2" stroke-dasharray="2 4"/><line x1="1086" y1="440" x2="1086" y2="1515" stroke="#c6c6c6" stroke-width="2" stroke-dasharray="2 4"/><line x1="1146" y1="440" x2="1146" y2="1515" stroke="#c6c6c6" stroke-width="2" stroke-dasharray="2 4"/><line x1="1205" y1="440" x2="1205" y2="1515" stroke="#c6c6c6" stroke-width="2" stroke-dasharray="2 4"/><line x1="1265" y1="440" x2="1265" y2="1515" stroke="#c6c6c6" stroke-width="2" stroke-dasharray="2 4"/><line x1="1324" y1="440" x2="1324" y2="1515" stroke="#c6c6c6" stroke-width="2" stroke-dasharray="2 4"/><line x1="1383" y1="440" x2="1383" y2="1515" stroke="#c6c6c6" stroke-width="2" stroke-dasharray="2 4"/><line x1="1443" y1="440" x2="1443" y2="1515" stroke="#c6c6c6" stroke-width="2" stroke-dasharray="2 4"/><line x1="1502" y1="440" x2="1502" y2="1515" stroke="#c6c6c6" stroke-width="2" stroke-dasharray="2 4"/><line x1="1562" y1="440" x2="1562" y2="1515" stroke="#c6c6c6" stroke-width="2" stroke-dasharray="2 4"/><line x1="1680" y1="440" x2="1680" y2="1515" stroke="#c6c6c6" stroke-width="2" stroke-dasharray="2 4"/><line x1="1740" y1="440" x2="1740" y2="1515" stroke="#c6c6c6" stroke-width="2" stroke-dasharray="2 4"/><line x1="1799" y1="440" x2="1799" y2="1515" stroke="#c6c6c6" stroke-width="2" stroke-dasharray="2 4"/><line x1="1859" y1="440" x2="1859" y2="1515" stroke="#c6c6c6" stroke-width="2" stroke-dasharray="2 4"/><line x1="1918" y1="440" x2="1918" y2="1515" stroke="#c6c6c6" stroke-width="2" stroke-dasharray="2 4"/><line x1="1977" y1="440" x2="1977" y2="1515" stroke="#c6c6c6" stroke-width="2" stroke-dasharray="2 4"/><line x1="2037" y1="440" x2="2037" y2="1515" stroke="#c6c6c6" stroke-width="2" stroke-dasharray="2 4"/><line x1="2096" y1="440" x2="2096" y2="1515" stroke="#c6c6c6" stroke-width="2" stroke-dasharray="2 4"/><line x1="2156" y1="440" x2="2156" y2="1515" stroke="#c6c6c6" stroke-width="2" stroke-dasharray="2 4"/><line x1="2275" y1="440" x2="2275" y2="1515" stroke="#c6c6c6" stroke-width="2" stroke-dasharray="2 4"/><line x1="2334" y1="440" x2="2334" y2="1515" stroke="#c6c6c6" stroke-width="2" stroke-dasharray="2 4"/><line x1="2394" y1="440" x2="2394" y2="1515" stroke="#c6c6c6" stroke-width="2" stroke-dasharray="2 4"/><line x1="2453" y1="440" x2="2453" y2="1515" stroke="#c6c6c6" stroke-width="2" stroke-dasharray="2 4"/><line x1="2513" y1="440" x2="2513" y2="1515" stroke="#c6c6c6" stroke-width="2" stroke-dasharray="2 4"/><line x1="2573" y1="440" x2="2573" y2="1515" stroke="#c6c6c6" stroke-width="2" stroke-dasharray="2 4"/><line x1="2632" y1="440" x2="2632" y2="1515" stroke="#c6c6c6" stroke-width="2" stroke-dasharray="2 4"/><line x1="2692" y1="440" x2="2692" y2="1515" stroke="#c6c6c6" stroke-width="2" stroke-dasharray="2 4"/><line x1="2751" y1="440" x2="2751" y2="1515" stroke="#c6c6c6" stroke-width="2" stroke-dasharray="2 4"/><line x1="432" y1="441" x2="2813" y2="441" stroke="#9c9c9c" stroke-width="2" stroke-dasharray="2 4"/><line x1="432" y1="619" x2="2813" y2="619" stroke="#9c9c9c" stroke-width="2" stroke-dasharray="2 4"/><line x1="432" y1="797" x2="2813" y2="797" stroke="#9c9c9c" stroke-width="2" stroke-dasharray="2 4"/><line x1="432" y1="977" x2="2813" y2="977" stroke="#9c9c9c" stroke-width="2" stroke-dasharray="2 4"/><line x1="432" y1="1155" x2="2813" y2="1155" stroke="#9c9c9c" stroke-width="2" stroke-dasharray="2 4"/><line x1="432" y1="1333" x2="2813" y2="1333" stroke="#9c9c9c" stroke-width="2" stroke-dasharray="2 4"/><line x1="432" y1="1513" x2="2813" y2="1513" stroke="#9c9c9c" stroke-width="2" stroke-dasharray="2 4"/><line x1="433" y1="440" x2="433" y2="1515" stroke="#9c9c9c" stroke-width="2" stroke-dasharray="2 4"/><line x1="1027" y1="440" x2="1027" y2="1515" stroke="#9c9c9c" stroke-width="2" stroke-dasharray="2 4"/><line x1="1621" y1="440" x2="1621" y2="1515" stroke="#9c9c9c" stroke-width="2" stroke-dasharray="2 4"/><line x1="2215" y1="440" x2="2215" y2="1515" stroke="#9c9c9c" stroke-width="2" stroke-dasharray="2 4"/><line x1="2811" y1="440" x2="2811" y2="1515" stroke="#9c9c9c" stroke-width="2" stroke-dasharray="2 4"/><line x1="415" y1="440" x2="415" y2="1514" stroke="#000" stroke-width="2"/><line x1="402" y1="441" x2="416" y2="441" stroke="#000" stroke-width="2"/><line x1="406" y1="475" x2="416" y2="475" stroke="#000" stroke-width="2"/><line x1="406" y1="511" x2="416" y2="511" stroke="#000" stroke-width="2"/><line x1="406" y1="547" x2="416" y2="547" stroke="#000" stroke-width="2"/><line x1="406" y1="583" x2="416" y2="583" stroke="#000" stroke-width="2"/><line x1="402" y1="619" x2="416" y2="619" stroke="#000" stroke-width="2"/><line x1="406" y1="655" x2="416" y2="655" stroke="#000" stroke-width="2"/><line x1="406" y1="691" x2="416" y2="691" stroke="#000" stroke-width="2"/><line x1="406" y1="725" x2="416" y2="725" stroke="#000" stroke-width="2"/><line x1="406" y1="761" x2="416" y2="761" stroke="#000" stroke-width="2"/><line x1="402" y1="797" x2="416" y2="797" stroke="#000" stroke-width="2"/><line x1="406" y1="833" x2="416" y2="833" stroke="#000" stroke-width="2"/><line x1="406" y1="869" x2="416" y2="869" stroke="#000" stroke-width="2"/><line x1="406" y1="905" x2="416" y2="905" stroke="#000" stroke-width="2"/><line x1="406" y1="941" x2="416" y2="941" stroke="#000" stroke-width="2"/><line x1="402" y1="977" x2="416" y2="977" stroke="#000" stroke-width="2"/><line x1="406" y1="1011" x2="416" y2="1011" stroke="#000" stroke-width="2"/><line x1="406" y1="1047" x2="416" y2="1047" stroke="#000" stroke-width="2"/><line x1="406" y1="1083" x2="416" y2="1083" stroke="#000" stroke-width="2"/><line x1="406" y1="1119" x2="416" y2="1119" stroke="#000" stroke-width="2"/><line x1="402" y1="1155" x2="416" y2="1155" stroke="#000" stroke-width="2"/><line x1="406" y1="1191" x2="416" y2="1191" stroke="#000" stroke-width="2"/><line x1="406" y1="1227" x2="416" y2="1227" stroke="#000" stroke-width="2"/><line x1="406" y1="1261" x2="416" y2="1261" stroke="#000" stroke-width="2"/><line x1="406" y1="1297" x2="416" y2="1297" stroke="#000" stroke-width="2"/><line x1="402" y1="1333" x2="416" y2="1333" stroke="#000" stroke-width="2"/><line x1="406" y1="1369" x2="416" y2="1369" stroke="#000" stroke-width="2"/><line x1="406" y1="1405" x2="416" y2="1405" stroke="#000" stroke-width="2"/><line x1="406" y1="1441" x2="416" y2="1441" stroke="#000" stroke-width="2"/><line x1="406" y1="1477" x2="416" y2="1477" stroke="#000" stroke-width="2"/><line x1="402" y1="1513" x2="416" y2="1513" stroke="#000" stroke-width="2"/><line x1="432" y1="1525" x2="2812" y2="1525" stroke="#000" stroke-width="2"/><line x1="433" y1="1524" x2="433" y2="1538" stroke="#000" stroke-width="2"/><line x1="491" y1="1524" x2="491" y2="1534" stroke="#000" stroke-width="2"/><line x1="551" y1="1524" x2="551" y2="1534" stroke="#000" stroke-width="2"/><line x1="611" y1="1524" x2="611" y2="1534" stroke="#000" stroke-width="2"/><line x1="669" y1="1524" x2="669" y2="1534" stroke="#000" stroke-width="2"/><line x1="729" y1="1524" x2="729" y2="1534" stroke="#000" stroke-width="2"/><line x1="789" y1="1524" x2="789" y2="1534" stroke="#000" stroke-width="2"/><line x1="849" y1="1524" x2="849" y2="1534" stroke="#000" stroke-width="2"/><line x1="908" y1="1524" x2="908" y2="1534" stroke="#000" stroke-width="2"/><line x1="968" y1="1524" x2="968" y2="1534" stroke="#000" stroke-width="2"/><line x1="1027" y1="1524" x2="1027" y2="1538" stroke="#000" stroke-width="2"/><line x1="1086" y1="1524" x2="1086" y2="1534" stroke="#000" stroke-width="2"/><line x1="1146" y1="1524" x2="1146" y2="1534" stroke="#000" stroke-width="2"/><line x1="1205" y1="1524" x2="1205" y2="1534" stroke="#000" stroke-width="2"/><line x1="1265" y1="1524" x2="1265" y2="1534" stroke="#000" stroke-width="2"/><line x1="1324" y1="1524" x2="1324" y2="1534" stroke="#000" stroke-width="2"/><line x1="1383" y1="1524" x2="1383" y2="1534" stroke="#000" stroke-width="2"/><line x1="1443" y1="1524" x2="1443" y2="1534" stroke="#000" stroke-width="2"/><line x1="1502" y1="1524" x2="1502" y2="1534" stroke="#000" stroke-width="2"/><line x1="1562" y1="1524" x2="1562" y2="1534" stroke="#000" stroke-width="2"/><line x1="1621" y1="1524" x2="1621" y2="1538" stroke="#000" stroke-width="2"/><line x1="1680" y1="1524" x2="1680" y2="1534" stroke="#000" stroke-width="2"/><line x1="1740" y1="1524" x2="1740" y2="1534" stroke="#000" stroke-width="2"/><line x1="1799" y1="1524" x2="1799" y2="1534" stroke="#000" stroke-width="2"/><line x1="1859" y1="1524" x2="1859" y2="1534" stroke="#000" stroke-width="2"/><line x1="1918" y1="1524" x2="1918" y2="1534" stroke="#000" stroke-width="2"/><line x1="1977" y1="1524" x2="1977" y2="1534" stroke="#000" stroke-width="2"/><line x1="2037" y1="1524" x2="2037" y2="1534" stroke="#000" stroke-width="2"/><line x1="2096" y1="1524" x2="2096" y2="1534" stroke="#000" stroke-width="2"/><line x1="2156" y1="1524" x2="2156" y2="1534" stroke="#000" stroke-width="2"/><line x1="2215" y1="1524" x2="2215" y2="1538" stroke="#000" stroke-width="2"/><line x1="2275" y1="1524" x2="2275" y2="1534" stroke="#000" stroke-width="2"/><line x1="2334" y1="1524" x2="2334" y2="1534" stroke="#000" stroke-width="2"/><line x1="2394" y1="1524" x2="2394" y2="1534" stroke="#000" stroke-width="2"/><line x1="2453" y1="1524" x2="2453" y2="1534" stroke="#000" stroke-width="2"/><line x1="2513" y1="1524" x2="2513" y2="1534" stroke="#000" stroke-width="2"/><line x1="2573" y1="1524" x2="2573" y2="1534" stroke="#000" stroke-width="2"/><line x1="2632" y1="1524" x2="2632" y2="1534" stroke="#000" stroke-width="2"/><line x1="2692" y1="1524" x2="2692" y2="1534" stroke="#000" stroke-width="2"/><line x1="2751" y1="1524" x2="2751" y2="1534" stroke="#000" stroke-width="2"/><line x1="2811" y1="1524" x2="2811" y2="1538" stroke="#000" stroke-width="2"/><path d="M433 975 L443 975 L443 950 L467 950 L467 896 L491 896 L491 844 L515 844 L515 794 L538 794 L538 747 L562 747 L562 703 L586 703 L586 664 L610 664 L610 629 L633 629 L633 619 L657 619 L657 619 L681 619 L681 619 L705 619 L705 619 L729 619 L729 619 L752 619 L752 619 L776 619 L776 619 L800 619 L800 619 L824 619 L824 619 L848 619 L848 629 L871 629 L871 664 L895 664 L895 703 L919 703 L919 747 L943 747 L943 794 L966 794 L966 844 L990 844 L990 896 L1014 896 L1014 950 L1038 950 L1038 975 L1062 975 L1062 975 L1085 975 L1085 975 L1109 975 L1109 975 L1133 975 L1133 975 L1157 975 L1157 975 L1181 975 L1181 975 L1204 975 L1204 975 L1228 975 L1228 975 L1252 975 L1252 975 L1276 975 L1276 975 L1299 975 L1299 975 L1323 975 L1323 975 L1347 975 L1347 975 L1371 975 L1371 975 L1395 975 L1395 975 L1418 975 L1418 975 L1442 975 L1442 975 L1466 975 L1466 975 L1490 975 L1490 975 L1513 975 L1513 975 L1537 975 L1537 975 L1561 975 L1561 975 L1585 975 L1585 975 L1609 975 L1609 975 L1632 975 L1632 950 L1656 950 L1656 896 L1680 896 L1680 844 L1704 844 L1704 794 L1728 794 L1728 747 L1751 747 L1751 703 L1775 703 L1775 664 L1799 664 L1799 629 L1823 629 L1823 619 L1846 619 L1846 619 L1870 619 L1870 619 L1894 619 L1894 619 L1918 619 L1918 619 L1942 619 L1942 619 L1965 619 L1965 619 L1989 619 L1989 619 L2013 619 L2013 619 L2037 619 L2037 629 L2061 629 L2061 664 L2084 664 L2084 703 L2108 703 L2108 747 L2132 747 L2132 794 L2156 794 L2156 844 L2179 844 L2179 896 L2203 896 L2203 950 L2227 950 L2227 975 L2251 975 L2251 975 L2275 975 L2275 975 L2299 975 L2299 975 L2322 975 L2322 975 L2346 975 L2346 975 L2370 975 L2370 975 L2394 975 L2394 975 L2418 975 L2418 975 L2442 975 L2442 975 L2466 975 L2466 975 L2490 975 L2490 975 L2513 975 L2513 975 L2537 975 L2537 975 L2561 975 L2561 975 L2585 975 L2585 975 L2609 975 L2609 975 L2633 975 L2633 975 L2657 975 L2657 975 L2680 975 L2680 975 L2704 975 L2704 975 L2728 975 L2728 975 L2752 975 L2752 975 L2776 975 L2776 975 L2800 975 L2800 975 L2811 975" fill="none" stroke="#bc3016" stroke-width="2" stroke-linejoin="miter" stroke-linecap="square"/><path d="M433.0 976.4 L434.2 973.7 L435.4 971.0 L436.6 968.3 L437.8 965.6 L438.9 962.9 L440.1 960.2 L441.3 957.5 L442.5 954.8 L443.7 952.1 L444.9 949.4 L446.1 946.8 L447.3 944.1 L448.4 941.4 L449.6 938.7 L450.8 936.0 L452.0 933.3 L453.2 930.6 L454.4 928.0 L455.6 925.3 L456.8 922.6 L457.9 919.9 L459.1 917.2 L460.3 914.6 L461.5 911.9 L462.7 909.2 L463.9 906.6 L465.1 903.9 L466.3 901.3 L467.5 898.6 L468.6 896.0 L469.8 893.3 L471.0 890.7 L472.2 888.0 L473.4 885.4 L474.6 882.8 L475.8 880.1 L477.0 877.5 L478.1 874.9 L479.3 872.3 L480.5 869.6 L481.7 867.0 L482.9 864.4 L484.1 861.8 L485.3 859.2 L486.5 856.6 L487.6 854.0 L488.8 851.5 L490.0 848.9 L491.2 846.3 L492.4 843.7 L493.6 841.2 L494.8 838.6 L496.0 836.1 L497.2 833.5 L498.3 831.0 L499.5 828.4 L500.7 825.9 L501.9 823.4 L503.1 820.9 L504.3 818.4 L505.5 815.9 L506.7 813.4 L507.8 810.9 L509.0 808.4 L510.2 805.9 L511.4 803.4 L512.6 801.0 L513.8 798.5 L515.0 796.1 L516.2 793.6 L517.3 791.2 L518.5 788.7 L519.7 786.3 L520.9 783.9 L522.1 781.5 L523.3 779.1 L524.5 776.7 L525.7 774.3 L526.9 772.0 L528.0 769.6 L529.2 767.2 L530.4 764.9 L531.6 762.5 L532.8 760.2 L534.0 757.9 L535.2 755.6 L536.4 753.2 L537.5 750.9 L538.7 748.7 L539.9 746.4 L541.1 744.1 L542.3 741.8 L543.5 739.6 L544.7 737.3 L545.9 735.1 L547.0 732.9 L548.2 730.7 L549.4 728.4 L550.6 726.3 L551.8 724.1 L553.0 721.9 L554.2 719.7 L555.4 717.6 L556.6 715.4 L557.7 713.3 L558.9 711.2 L560.1 709.0 L561.3 706.9 L562.5 704.8 L563.7 702.8 L564.9 700.7 L566.1 698.6 L567.2 696.6 L568.4 694.5 L569.6 692.5 L570.8 690.5 L572.0 688.5 L573.2 686.5 L574.4 684.5 L575.6 682.5 L576.7 680.6 L577.9 678.6 L579.1 676.7 L580.3 674.8 L581.5 672.8 L582.7 670.9 L583.9 669.0 L585.1 667.2 L586.3 665.3 L587.4 663.5 L588.6 661.6 L589.8 659.8 L591.0 658.0 L592.2 656.2 L593.4 654.4 L594.6 652.6 L595.8 650.8 L596.9 649.1 L598.1 647.3 L599.3 645.6 L600.5 643.9 L601.7 642.2 L602.9 640.5 L604.1 638.8 L605.3 637.2 L606.4 635.5 L607.6 633.9 L608.8 632.3 L610.0 630.7 L611.2 629.1 L612.4 627.5 L613.6 625.9 L614.8 624.4 L616.0 622.9 L617.1 621.3 L618.3 619.8 L619.5 618.3 L620.7 616.8 L621.9 615.4 L623.1 613.9 L624.3 612.5 L625.5 611.1 L626.6 609.7 L627.8 608.3 L629.0 606.9 L630.2 605.5 L631.4 604.2 L632.6 602.8 L633.8 601.5 L635.0 600.2 L636.1 598.9 L637.3 597.6 L638.5 596.4 L639.7 595.1 L640.9 593.9 L642.1 592.7 L643.3 591.5 L644.5 590.3 L645.7 589.1 L646.8 588.0 L648.0 586.8 L649.2 585.7 L650.4 584.6 L651.6 583.5 L652.8 582.4 L654.0 581.3 L655.2 580.3 L656.3 579.3 L657.5 578.2 L658.7 577.2 L659.9 576.3 L661.1 575.3 L662.3 574.3 L663.5 573.4 L664.7 572.5 L665.8 571.6 L667.0 570.7 L668.2 569.8 L669.4 569.0 L670.6 568.1 L671.8 567.3 L673.0 566.5 L674.2 565.7 L675.4 564.9 L676.5 564.1 L677.7 563.4 L678.9 562.7 L680.1 562.0 L681.3 561.3 L682.5 560.6 L683.7 559.9 L684.9 559.3 L686.0 558.6 L687.2 558.0 L688.4 557.4 L689.6 556.9 L690.8 556.3 L692.0 555.7 L693.2 555.2 L694.4 554.7 L695.5 554.2 L696.7 553.7 L697.9 553.3 L699.1 552.8 L700.3 552.4 L701.5 552.0 L702.7 551.6 L703.9 551.2 L705.1 550.8 L706.2 550.5 L707.4 550.2 L708.6 549.8 L709.8 549.5 L711.0 549.3 L712.2 549.0 L713.4 548.8 L714.6 548.5 L715.7 548.3 L716.9 548.1 L718.1 547.9 L719.3 547.8 L720.5 547.6 L721.7 547.5 L722.9 547.4 L724.1 547.3 L725.2 547.2 L726.4 547.2 L727.6 547.1 L728.8 547.1 L730.0 547.1 L731.2 547.1 L732.4 547.1 L733.6 547.2 L734.8 547.2 L735.9 547.3 L737.1 547.4 L738.3 547.5 L739.5 547.6 L740.7 547.8 L741.9 547.9 L743.1 548.1 L744.3 548.3 L745.4 548.5 L746.6 548.8 L747.8 549.0 L749.0 549.3 L750.2 549.5 L751.4 549.8 L752.6 550.2 L753.8 550.5 L754.9 550.8 L756.1 551.2 L757.3 551.6 L758.5 552.0 L759.7 552.4 L760.9 552.8 L762.1 553.3 L763.3 553.7 L764.5 554.2 L765.6 554.7 L766.8 555.2 L768.0 555.7 L769.2 556.3 L770.4 556.9 L771.6 557.4 L772.8 558.0 L774.0 558.6 L775.1 559.3 L776.3 559.9 L777.5 560.6 L778.7 561.3 L779.9 562.0 L781.1 562.7 L782.3 563.4 L783.5 564.1 L784.6 564.9 L785.8 565.7 L787.0 566.5 L788.2 567.3 L789.4 568.1 L790.6 569.0 L791.8 569.8 L793.0 570.7 L794.2 571.6 L795.3 572.5 L796.5 573.4 L797.7 574.3 L798.9 575.3 L800.1 576.3 L801.3 577.2 L802.5 578.2 L803.7 579.3 L804.8 580.3 L806.0 581.3 L807.2 582.4 L808.4 583.5 L809.6 584.6 L810.8 585.7 L812.0 586.8 L813.2 588.0 L814.3 589.1 L815.5 590.3 L816.7 591.5 L817.9 592.7 L819.1 593.9 L820.3 595.1 L821.5 596.4 L822.7 597.6 L823.9 598.9 L825.0 600.2 L826.2 601.5 L827.4 602.8 L828.6 604.2 L829.8 605.5 L831.0 606.9 L832.2 608.3 L833.4 609.7 L834.5 611.1 L835.7 612.5 L836.9 613.9 L838.1 615.4 L839.3 616.8 L840.5 618.3 L841.7 619.8 L842.9 621.3 L844.0 622.9 L845.2 624.4 L846.4 625.9 L847.6 627.5 L848.8 629.1 L850.0 630.7 L851.2 632.3 L852.4 633.9 L853.6 635.5 L854.7 637.2 L855.9 638.8 L857.1 640.5 L858.3 642.2 L859.5 643.9 L860.7 645.6 L861.9 647.3 L863.1 649.1 L864.2 650.8 L865.4 652.6 L866.6 654.4 L867.8 656.2 L869.0 658.0 L870.2 659.8 L871.4 661.6 L872.6 663.5 L873.7 665.3 L874.9 667.2 L876.1 669.0 L877.3 670.9 L878.5 672.8 L879.7 674.8 L880.9 676.7 L882.1 678.6 L883.3 680.6 L884.4 682.5 L885.6 684.5 L886.8 686.5 L888.0 688.5 L889.2 690.5 L890.4 692.5 L891.6 694.5 L892.8 696.6 L893.9 698.6 L895.1 700.7 L896.3 702.8 L897.5 704.8 L898.7 706.9 L899.9 709.0 L901.1 711.2 L902.3 713.3 L903.4 715.4 L904.6 717.6 L905.8 719.7 L907.0 721.9 L908.2 724.1 L909.4 726.3 L910.6 728.4 L911.8 730.7 L913.0 732.9 L914.1 735.1 L915.3 737.3 L916.5 739.6 L917.7 741.8 L918.9 744.1 L920.1 746.4 L921.3 748.7 L922.5 750.9 L923.6 753.2 L924.8 755.6 L926.0 757.9 L927.2 760.2 L928.4 762.5 L929.6 764.9 L930.8 767.2 L932.0 769.6 L933.1 772.0 L934.3 774.3 L935.5 776.7 L936.7 779.1 L937.9 781.5 L939.1 783.9 L940.3 786.3 L941.5 788.7 L942.7 791.2 L943.8 793.6 L945.0 796.1 L946.2 798.5 L947.4 801.0 L948.6 803.4 L949.8 805.9 L951.0 808.4 L952.2 810.9 L953.3 813.4 L954.5 815.9 L955.7 818.4 L956.9 820.9 L958.1 823.4 L959.3 825.9 L960.5 828.4 L961.7 831.0 L962.8 833.5 L964.0 836.1 L965.2 838.6 L966.4 841.2 L967.6 843.7 L968.8 846.3 L970.0 848.9 L971.2 851.5 L972.4 854.0 L973.5 856.6 L974.7 859.2 L975.9 861.8 L977.1 864.4 L978.3 867.0 L979.5 869.6 L980.7 872.3 L981.9 874.9 L983.0 877.5 L984.2 880.1 L985.4 882.8 L986.6 885.4 L987.8 888.0 L989.0 890.7 L990.2 893.3 L991.4 896.0 L992.5 898.6 L993.7 901.3 L994.9 903.9 L996.1 906.6 L997.3 909.2 L998.5 911.9 L999.7 914.6 L1000.9 917.2 L1002.1 919.9 L1003.2 922.6 L1004.4 925.3 L1005.6 928.0 L1006.8 930.6 L1008.0 933.3 L1009.2 936.0 L1010.4 938.7 L1011.6 941.4 L1012.7 944.1 L1013.9 946.8 L1015.1 949.4 L1016.3 952.1 L1017.5 954.8 L1018.7 957.5 L1019.9 960.2 L1021.1 962.9 L1022.2 965.6 L1023.4 968.3 L1024.6 971.0 L1025.8 973.7 L1027.0 976.4 L1028.2 979.1 L1029.4 981.8 L1030.6 984.5 L1031.8 987.2 L1032.9 989.9 L1034.1 992.6 L1035.3 995.3 L1036.5 998.0 L1037.7 1000.7 L1038.9 1003.4 L1040.1 1006.0 L1041.3 1008.7 L1042.4 1011.4 L1043.6 1014.1 L1044.8 1016.8 L1046.0 1019.5 L1047.2 1022.2 L1048.4 1024.8 L1049.6 1027.5 L1050.8 1030.2 L1051.9 1032.9 L1053.1 1035.6 L1054.3 1038.2 L1055.5 1040.9 L1056.7 1043.6 L1057.9 1046.2 L1059.1 1048.9 L1060.3 1051.5 L1061.5 1054.2 L1062.6 1056.8 L1063.8 1059.5 L1065.0 1062.1 L1066.2 1064.8 L1067.4 1067.4 L1068.6 1070.0 L1069.8 1072.7 L1071.0 1075.3 L1072.1 1077.9 L1073.3 1080.5 L1074.5 1083.2 L1075.7 1085.8 L1076.9 1088.4 L1078.1 1091.0 L1079.3 1093.6 L1080.5 1096.2 L1081.6 1098.8 L1082.8 1101.3 L1084.0 1103.9 L1085.2 1106.5 L1086.4 1109.1 L1087.6 1111.6 L1088.8 1114.2 L1090.0 1116.7 L1091.2 1119.3 L1092.3 1121.8 L1093.5 1124.4 L1094.7 1126.9 L1095.9 1129.4 L1097.1 1131.9 L1098.3 1134.4 L1099.5 1136.9 L1100.7 1139.4 L1101.8 1141.9 L1103.0 1144.4 L1104.2 1146.9 L1105.4 1149.4 L1106.6 1151.8 L1107.8 1154.3 L1109.0 1156.7 L1110.2 1159.2 L1111.3 1161.6 L1112.5 1164.1 L1113.7 1166.5 L1114.9 1168.9 L1116.1 1171.3 L1117.3 1173.7 L1118.5 1176.1 L1119.7 1178.5 L1120.9 1180.8 L1122.0 1183.2 L1123.2 1185.6 L1124.4 1187.9 L1125.6 1190.3 L1126.8 1192.6 L1128.0 1194.9 L1129.2 1197.2 L1130.4 1199.6 L1131.5 1201.9 L1132.7 1204.1 L1133.9 1206.4 L1135.1 1208.7 L1136.3 1211.0 L1137.5 1213.2 L1138.7 1215.5 L1139.9 1217.7 L1141.0 1219.9 L1142.2 1222.1 L1143.4 1224.4 L1144.6 1226.5 L1145.8 1228.7 L1147.0 1230.9 L1148.2 1233.1 L1149.4 1235.2 L1150.6 1237.4 L1151.7 1239.5 L1152.9 1241.6 L1154.1 1243.8 L1155.3 1245.9 L1156.5 1248.0 L1157.7 1250.0 L1158.9 1252.1 L1160.1 1254.2 L1161.2 1256.2 L1162.4 1258.3 L1163.6 1260.3 L1164.8 1262.3 L1166.0 1264.3 L1167.2 1266.3 L1168.4 1268.3 L1169.6 1270.3 L1170.7 1272.2 L1171.9 1274.2 L1173.1 1276.1 L1174.3 1278.0 L1175.5 1280.0 L1176.7 1281.9 L1177.9 1283.8 L1179.1 1285.6 L1180.3 1287.5 L1181.4 1289.3 L1182.6 1291.2 L1183.8 1293.0 L1185.0 1294.8 L1186.2 1296.6 L1187.4 1298.4 L1188.6 1300.2 L1189.8 1302.0 L1190.9 1303.7 L1192.1 1305.5 L1193.3 1307.2 L1194.5 1308.9 L1195.7 1310.6 L1196.9 1312.3 L1198.1 1314.0 L1199.3 1315.6 L1200.4 1317.3 L1201.6 1318.9 L1202.8 1320.5 L1204.0 1322.1 L1205.2 1323.7 L1206.4 1325.3 L1207.6 1326.9 L1208.8 1328.4 L1210.0 1329.9 L1211.1 1331.5 L1212.3 1333.0 L1213.5 1334.5 L1214.7 1336.0 L1215.9 1337.4 L1217.1 1338.9 L1218.3 1340.3 L1219.5 1341.7 L1220.6 1343.1 L1221.8 1344.5 L1223.0 1345.9 L1224.2 1347.3 L1225.4 1348.6 L1226.6 1350.0 L1227.8 1351.3 L1229.0 1352.6 L1230.1 1353.9 L1231.3 1355.2 L1232.5 1356.4 L1233.7 1357.7 L1234.9 1358.9 L1236.1 1360.1 L1237.3 1361.3 L1238.5 1362.5 L1239.7 1363.7 L1240.8 1364.8 L1242.0 1366.0 L1243.2 1367.1 L1244.4 1368.2 L1245.6 1369.3 L1246.8 1370.4 L1248.0 1371.5 L1249.2 1372.5 L1250.3 1373.5 L1251.5 1374.6 L1252.7 1375.6 L1253.9 1376.5 L1255.1 1377.5 L1256.3 1378.5 L1257.5 1379.4 L1258.7 1380.3 L1259.8 1381.2 L1261.0 1382.1 L1262.2 1383.0 L1263.4 1383.8 L1264.6 1384.7 L1265.8 1385.5 L1267.0 1386.3 L1268.2 1387.1 L1269.4 1387.9 L1270.5 1388.7 L1271.7 1389.4 L1272.9 1390.1 L1274.1 1390.8 L1275.3 1391.5 L1276.5 1392.2 L1277.7 1392.9 L1278.9 1393.5 L1280.0 1394.2 L1281.2 1394.8 L1282.4 1395.4 L1283.6 1395.9 L1284.8 1396.5 L1286.0 1397.1 L1287.2 1397.6 L1288.4 1398.1 L1289.5 1398.6 L1290.7 1399.1 L1291.9 1399.5 L1293.1 1400.0 L1294.3 1400.4 L1295.5 1400.8 L1296.7 1401.2 L1297.9 1401.6 L1299.1 1402.0 L1300.2 1402.3 L1301.4 1402.6 L1302.6 1403.0 L1303.8 1403.3 L1305.0 1403.5 L1306.2 1403.8 L1307.4 1404.0 L1308.6 1404.3 L1309.7 1404.5 L1310.9 1404.7 L1312.1 1404.9 L1313.3 1405.0 L1314.5 1405.2 L1315.7 1405.3 L1316.9 1405.4 L1318.1 1405.5 L1319.2 1405.6 L1320.4 1405.6 L1321.6 1405.7 L1322.8 1405.7 L1324.0 1405.7 L1325.2 1405.7 L1326.4 1405.7 L1327.6 1405.6 L1328.8 1405.6 L1329.9 1405.5 L1331.1 1405.4 L1332.3 1405.3 L1333.5 1405.2 L1334.7 1405.0 L1335.9 1404.9 L1337.1 1404.7 L1338.3 1404.5 L1339.4 1404.3 L1340.6 1404.0 L1341.8 1403.8 L1343.0 1403.5 L1344.2 1403.3 L1345.4 1403.0 L1346.6 1402.6 L1347.8 1402.3 L1348.9 1402.0 L1350.1 1401.6 L1351.3 1401.2 L1352.5 1400.8 L1353.7 1400.4 L1354.9 1400.0 L1356.1 1399.5 L1357.3 1399.1 L1358.5 1398.6 L1359.6 1398.1 L1360.8 1397.6 L1362.0 1397.1 L1363.2 1396.5 L1364.4 1395.9 L1365.6 1395.4 L1366.8 1394.8 L1368.0 1394.2 L1369.1 1393.5 L1370.3 1392.9 L1371.5 1392.2 L1372.7 1391.5 L1373.9 1390.8 L1375.1 1390.1 L1376.3 1389.4 L1377.5 1388.7 L1378.6 1387.9 L1379.8 1387.1 L1381.0 1386.3 L1382.2 1385.5 L1383.4 1384.7 L1384.6 1383.8 L1385.8 1383.0 L1387.0 1382.1 L1388.2 1381.2 L1389.3 1380.3 L1390.5 1379.4 L1391.7 1378.5 L1392.9 1377.5 L1394.1 1376.5 L1395.3 1375.6 L1396.5 1374.6 L1397.7 1373.5 L1398.8 1372.5 L1400.0 1371.5 L1401.2 1370.4 L1402.4 1369.3 L1403.6 1368.2 L1404.8 1367.1 L1406.0 1366.0 L1407.2 1364.8 L1408.3 1363.7 L1409.5 1362.5 L1410.7 1361.3 L1411.9 1360.1 L1413.1 1358.9 L1414.3 1357.7 L1415.5 1356.4 L1416.7 1355.2 L1417.9 1353.9 L1419.0 1352.6 L1420.2 1351.3 L1421.4 1350.0 L1422.6 1348.6 L1423.8 1347.3 L1425.0 1345.9 L1426.2 1344.5 L1427.4 1343.1 L1428.5 1341.7 L1429.7 1340.3 L1430.9 1338.9 L1432.1 1337.4 L1433.3 1336.0 L1434.5 1334.5 L1435.7 1333.0 L1436.9 1331.5 L1438.0 1329.9 L1439.2 1328.4 L1440.4 1326.9 L1441.6 1325.3 L1442.8 1323.7 L1444.0 1322.1 L1445.2 1320.5 L1446.4 1318.9 L1447.6 1317.3 L1448.7 1315.6 L1449.9 1314.0 L1451.1 1312.3 L1452.3 1310.6 L1453.5 1308.9 L1454.7 1307.2 L1455.9 1305.5 L1457.1 1303.7 L1458.2 1302.0 L1459.4 1300.2 L1460.6 1298.4 L1461.8 1296.6 L1463.0 1294.8 L1464.2 1293.0 L1465.4 1291.2 L1466.6 1289.3 L1467.7 1287.5 L1468.9 1285.6 L1470.1 1283.8 L1471.3 1281.9 L1472.5 1280.0 L1473.7 1278.0 L1474.9 1276.1 L1476.1 1274.2 L1477.3 1272.2 L1478.4 1270.3 L1479.6 1268.3 L1480.8 1266.3 L1482.0 1264.3 L1483.2 1262.3 L1484.4 1260.3 L1485.6 1258.3 L1486.8 1256.2 L1487.9 1254.2 L1489.1 1252.1 L1490.3 1250.0 L1491.5 1248.0 L1492.7 1245.9 L1493.9 1243.8 L1495.1 1241.6 L1496.3 1239.5 L1497.4 1237.4 L1498.6 1235.2 L1499.8 1233.1 L1501.0 1230.9 L1502.2 1228.7 L1503.4 1226.5 L1504.6 1224.4 L1505.8 1222.1 L1507.0 1219.9 L1508.1 1217.7 L1509.3 1215.5 L1510.5 1213.2 L1511.7 1211.0 L1512.9 1208.7 L1514.1 1206.4 L1515.3 1204.1 L1516.5 1201.9 L1517.6 1199.6 L1518.8 1197.2 L1520.0 1194.9 L1521.2 1192.6 L1522.4 1190.3 L1523.6 1187.9 L1524.8 1185.6 L1526.0 1183.2 L1527.1 1180.8 L1528.3 1178.5 L1529.5 1176.1 L1530.7 1173.7 L1531.9 1171.3 L1533.1 1168.9 L1534.3 1166.5 L1535.5 1164.1 L1536.7 1161.6 L1537.8 1159.2 L1539.0 1156.7 L1540.2 1154.3 L1541.4 1151.8 L1542.6 1149.4 L1543.8 1146.9 L1545.0 1144.4 L1546.2 1141.9 L1547.3 1139.4 L1548.5 1136.9 L1549.7 1134.4 L1550.9 1131.9 L1552.1 1129.4 L1553.3 1126.9 L1554.5 1124.4 L1555.7 1121.8 L1556.8 1119.3 L1558.0 1116.7 L1559.2 1114.2 L1560.4 1111.6 L1561.6 1109.1 L1562.8 1106.5 L1564.0 1103.9 L1565.2 1101.3 L1566.4 1098.8 L1567.5 1096.2 L1568.7 1093.6 L1569.9 1091.0 L1571.1 1088.4 L1572.3 1085.8 L1573.5 1083.2 L1574.7 1080.5 L1575.9 1077.9 L1577.0 1075.3 L1578.2 1072.7 L1579.4 1070.0 L1580.6 1067.4 L1581.8 1064.8 L1583.0 1062.1 L1584.2 1059.5 L1585.4 1056.8 L1586.5 1054.2 L1587.7 1051.5 L1588.9 1048.9 L1590.1 1046.2 L1591.3 1043.6 L1592.5 1040.9 L1593.7 1038.2 L1594.9 1035.6 L1596.1 1032.9 L1597.2 1030.2 L1598.4 1027.5 L1599.6 1024.8 L1600.8 1022.2 L1602.0 1019.5 L1603.2 1016.8 L1604.4 1014.1 L1605.6 1011.4 L1606.7 1008.7 L1607.9 1006.0 L1609.1 1003.4 L1610.3 1000.7 L1611.5 998.0 L1612.7 995.3 L1613.9 992.6 L1615.1 989.9 L1616.2 987.2 L1617.4 984.5 L1618.6 981.8 L1619.8 979.1 L1621.0 976.4 L1622.2 973.7 L1623.4 971.0 L1624.6 968.3 L1625.8 965.6 L1626.9 962.9 L1628.1 960.2 L1629.3 957.5 L1630.5 954.8 L1631.7 952.1 L1632.9 949.4 L1634.1 946.8 L1635.3 944.1 L1636.4 941.4 L1637.6 938.7 L1638.8 936.0 L1640.0 933.3 L1641.2 930.6 L1642.4 928.0 L1643.6 925.3 L1644.8 922.6 L1645.9 919.9 L1647.1 917.2 L1648.3 914.6 L1649.5 911.9 L1650.7 909.2 L1651.9 906.6 L1653.1 903.9 L1654.3 901.3 L1655.5 898.6 L1656.6 896.0 L1657.8 893.3 L1659.0 890.7 L1660.2 888.0 L1661.4 885.4 L1662.6 882.8 L1663.8 880.1 L1665.0 877.5 L1666.1 874.9 L1667.3 872.3 L1668.5 869.6 L1669.7 867.0 L1670.9 864.4 L1672.1 861.8 L1673.3 859.2 L1674.5 856.6 L1675.6 854.0 L1676.8 851.5 L1678.0 848.9 L1679.2 846.3 L1680.4 843.7 L1681.6 841.2 L1682.8 838.6 L1684.0 836.1 L1685.2 833.5 L1686.3 831.0 L1687.5 828.4 L1688.7 825.9 L1689.9 823.4 L1691.1 820.9 L1692.3 818.4 L1693.5 815.9 L1694.7 813.4 L1695.8 810.9 L1697.0 808.4 L1698.2 805.9 L1699.4 803.4 L1700.6 801.0 L1701.8 798.5 L1703.0 796.1 L1704.2 793.6 L1705.3 791.2 L1706.5 788.7 L1707.7 786.3 L1708.9 783.9 L1710.1 781.5 L1711.3 779.1 L1712.5 776.7 L1713.7 774.3 L1714.9 772.0 L1716.0 769.6 L1717.2 767.2 L1718.4 764.9 L1719.6 762.5 L1720.8 760.2 L1722.0 757.9 L1723.2 755.6 L1724.4 753.2 L1725.5 750.9 L1726.7 748.7 L1727.9 746.4 L1729.1 744.1 L1730.3 741.8 L1731.5 739.6 L1732.7 737.3 L1733.9 735.1 L1735.0 732.9 L1736.2 730.7 L1737.4 728.4 L1738.6 726.3 L1739.8 724.1 L1741.0 721.9 L1742.2 719.7 L1743.4 717.6 L1744.6 715.4 L1745.7 713.3 L1746.9 711.2 L1748.1 709.0 L1749.3 706.9 L1750.5 704.8 L1751.7 702.8 L1752.9 700.7 L1754.1 698.6 L1755.2 696.6 L1756.4 694.5 L1757.6 692.5 L1758.8 690.5 L1760.0 688.5 L1761.2 686.5 L1762.4 684.5 L1763.6 682.5 L1764.7 680.6 L1765.9 678.6 L1767.1 676.7 L1768.3 674.8 L1769.5 672.8 L1770.7 670.9 L1771.9 669.0 L1773.1 667.2 L1774.3 665.3 L1775.4 663.5 L1776.6 661.6 L1777.8 659.8 L1779.0 658.0 L1780.2 656.2 L1781.4 654.4 L1782.6 652.6 L1783.8 650.8 L1784.9 649.1 L1786.1 647.3 L1787.3 645.6 L1788.5 643.9 L1789.7 642.2 L1790.9 640.5 L1792.1 638.8 L1793.3 637.2 L1794.4 635.5 L1795.6 633.9 L1796.8 632.3 L1798.0 630.7 L1799.2 629.1 L1800.4 627.5 L1801.6 625.9 L1802.8 624.4 L1804.0 622.9 L1805.1 621.3 L1806.3 619.8 L1807.5 618.3 L1808.7 616.8 L1809.9 615.4 L1811.1 613.9 L1812.3 612.5 L1813.5 611.1 L1814.6 609.7 L1815.8 608.3 L1817.0 606.9 L1818.2 605.5 L1819.4 604.2 L1820.6 602.8 L1821.8 601.5 L1823.0 600.2 L1824.1 598.9 L1825.3 597.6 L1826.5 596.4 L1827.7 595.1 L1828.9 593.9 L1830.1 592.7 L1831.3 591.5 L1832.5 590.3 L1833.7 589.1 L1834.8 588.0 L1836.0 586.8 L1837.2 585.7 L1838.4 584.6 L1839.6 583.5 L1840.8 582.4 L1842.0 581.3 L1843.2 580.3 L1844.3 579.3 L1845.5 578.2 L1846.7 577.2 L1847.9 576.3 L1849.1 575.3 L1850.3 574.3 L1851.5 573.4 L1852.7 572.5 L1853.8 571.6 L1855.0 570.7 L1856.2 569.8 L1857.4 569.0 L1858.6 568.1 L1859.8 567.3 L1861.0 566.5 L1862.2 565.7 L1863.4 564.9 L1864.5 564.1 L1865.7 563.4 L1866.9 562.7 L1868.1 562.0 L1869.3 561.3 L1870.5 560.6 L1871.7 559.9 L1872.9 559.3 L1874.0 558.6 L1875.2 558.0 L1876.4 557.4 L1877.6 556.9 L1878.8 556.3 L1880.0 555.7 L1881.2 555.2 L1882.4 554.7 L1883.5 554.2 L1884.7 553.7 L1885.9 553.3 L1887.1 552.8 L1888.3 552.4 L1889.5 552.0 L1890.7 551.6 L1891.9 551.2 L1893.1 550.8 L1894.2 550.5 L1895.4 550.2 L1896.6 549.8 L1897.8 549.5 L1899.0 549.3 L1900.2 549.0 L1901.4 548.8 L1902.6 548.5 L1903.7 548.3 L1904.9 548.1 L1906.1 547.9 L1907.3 547.8 L1908.5 547.6 L1909.7 547.5 L1910.9 547.4 L1912.1 547.3 L1913.2 547.2 L1914.4 547.2 L1915.6 547.1 L1916.8 547.1 L1918.0 547.1 L1919.2 547.1 L1920.4 547.1 L1921.6 547.2 L1922.8 547.2 L1923.9 547.3 L1925.1 547.4 L1926.3 547.5 L1927.5 547.6 L1928.7 547.8 L1929.9 547.9 L1931.1 548.1 L1932.3 548.3 L1933.4 548.5 L1934.6 548.8 L1935.8 549.0 L1937.0 549.3 L1938.2 549.5 L1939.4 549.8 L1940.6 550.2 L1941.8 550.5 L1942.9 550.8 L1944.1 551.2 L1945.3 551.6 L1946.5 552.0 L1947.7 552.4 L1948.9 552.8 L1950.1 553.3 L1951.3 553.7 L1952.5 554.2 L1953.6 554.7 L1954.8 555.2 L1956.0 555.7 L1957.2 556.3 L1958.4 556.9 L1959.6 557.4 L1960.8 558.0 L1962.0 558.6 L1963.1 559.3 L1964.3 559.9 L1965.5 560.6 L1966.7 561.3 L1967.9 562.0 L1969.1 562.7 L1970.3 563.4 L1971.5 564.1 L1972.6 564.9 L1973.8 565.7 L1975.0 566.5 L1976.2 567.3 L1977.4 568.1 L1978.6 569.0 L1979.8 569.8 L1981.0 570.7 L1982.2 571.6 L1983.3 572.5 L1984.5 573.4 L1985.7 574.3 L1986.9 575.3 L1988.1 576.3 L1989.3 577.2 L1990.5 578.2 L1991.7 579.3 L1992.8 580.3 L1994.0 581.3 L1995.2 582.4 L1996.4 583.5 L1997.6 584.6 L1998.8 585.7 L2000.0 586.8 L2001.2 588.0 L2002.3 589.1 L2003.5 590.3 L2004.7 591.5 L2005.9 592.7 L2007.1 593.9 L2008.3 595.1 L2009.5 596.4 L2010.7 597.6 L2011.9 598.9 L2013.0 600.2 L2014.2 601.5 L2015.4 602.8 L2016.6 604.2 L2017.8 605.5 L2019.0 606.9 L2020.2 608.3 L2021.4 609.7 L2022.5 611.1 L2023.7 612.5 L2024.9 613.9 L2026.1 615.4 L2027.3 616.8 L2028.5 618.3 L2029.7 619.8 L2030.9 621.3 L2032.0 622.9 L2033.2 624.4 L2034.4 625.9 L2035.6 627.5 L2036.8 629.1 L2038.0 630.7 L2039.2 632.3 L2040.4 633.9 L2041.6 635.5 L2042.7 637.2 L2043.9 638.8 L2045.1 640.5 L2046.3 642.2 L2047.5 643.9 L2048.7 645.6 L2049.9 647.3 L2051.1 649.1 L2052.2 650.8 L2053.4 652.6 L2054.6 654.4 L2055.8 656.2 L2057.0 658.0 L2058.2 659.8 L2059.4 661.6 L2060.6 663.5 L2061.7 665.3 L2062.9 667.2 L2064.1 669.0 L2065.3 670.9 L2066.5 672.8 L2067.7 674.8 L2068.9 676.7 L2070.1 678.6 L2071.3 680.6 L2072.4 682.5 L2073.6 684.5 L2074.8 686.5 L2076.0 688.5 L2077.2 690.5 L2078.4 692.5 L2079.6 694.5 L2080.8 696.6 L2081.9 698.6 L2083.1 700.7 L2084.3 702.8 L2085.5 704.8 L2086.7 706.9 L2087.9 709.0 L2089.1 711.2 L2090.3 713.3 L2091.4 715.4 L2092.6 717.6 L2093.8 719.7 L2095.0 721.9 L2096.2 724.1 L2097.4 726.3 L2098.6 728.4 L2099.8 730.7 L2101.0 732.9 L2102.1 735.1 L2103.3 737.3 L2104.5 739.6 L2105.7 741.8 L2106.9 744.1 L2108.1 746.4 L2109.3 748.7 L2110.5 750.9 L2111.6 753.2 L2112.8 755.6 L2114.0 757.9 L2115.2 760.2 L2116.4 762.5 L2117.6 764.9 L2118.8 767.2 L2120.0 769.6 L2121.1 772.0 L2122.3 774.3 L2123.5 776.7 L2124.7 779.1 L2125.9 781.5 L2127.1 783.9 L2128.3 786.3 L2129.5 788.7 L2130.7 791.2 L2131.8 793.6 L2133.0 796.1 L2134.2 798.5 L2135.4 801.0 L2136.6 803.4 L2137.8 805.9 L2139.0 808.4 L2140.2 810.9 L2141.3 813.4 L2142.5 815.9 L2143.7 818.4 L2144.9 820.9 L2146.1 823.4 L2147.3 825.9 L2148.5 828.4 L2149.7 831.0 L2150.8 833.5 L2152.0 836.1 L2153.2 838.6 L2154.4 841.2 L2155.6 843.7 L2156.8 846.3 L2158.0 848.9 L2159.2 851.5 L2160.4 854.0 L2161.5 856.6 L2162.7 859.2 L2163.9 861.8 L2165.1 864.4 L2166.3 867.0 L2167.5 869.6 L2168.7 872.3 L2169.9 874.9 L2171.0 877.5 L2172.2 880.1 L2173.4 882.8 L2174.6 885.4 L2175.8 888.0 L2177.0 890.7 L2178.2 893.3 L2179.4 896.0 L2180.5 898.6 L2181.7 901.3 L2182.9 903.9 L2184.1 906.6 L2185.3 909.2 L2186.5 911.9 L2187.7 914.6 L2188.9 917.2 L2190.1 919.9 L2191.2 922.6 L2192.4 925.3 L2193.6 928.0 L2194.8 930.6 L2196.0 933.3 L2197.2 936.0 L2198.4 938.7 L2199.6 941.4 L2200.7 944.1 L2201.9 946.8 L2203.1 949.4 L2204.3 952.1 L2205.5 954.8 L2206.7 957.5 L2207.9 960.2 L2209.1 962.9 L2210.2 965.6 L2211.4 968.3 L2212.6 971.0 L2213.8 973.7 L2215.0 976.4 L2216.2 979.1 L2217.4 981.8 L2218.6 984.5 L2219.8 987.2 L2221.0 989.9 L2222.2 992.6 L2223.3 995.3 L2224.5 998.0 L2225.7 1000.7 L2226.9 1003.4 L2228.1 1006.0 L2229.3 1008.7 L2230.5 1011.4 L2231.7 1014.1 L2232.9 1016.8 L2234.1 1019.5 L2235.3 1022.2 L2236.5 1024.8 L2237.6 1027.5 L2238.8 1030.2 L2240.0 1032.9 L2241.2 1035.6 L2242.4 1038.2 L2243.6 1040.9 L2244.8 1043.6 L2246.0 1046.2 L2247.2 1048.9 L2248.4 1051.5 L2249.6 1054.2 L2250.8 1056.8 L2252.0 1059.5 L2253.1 1062.1 L2254.3 1064.8 L2255.5 1067.4 L2256.7 1070.0 L2257.9 1072.7 L2259.1 1075.3 L2260.3 1077.9 L2261.5 1080.5 L2262.7 1083.2 L2263.9 1085.8 L2265.1 1088.4 L2266.3 1091.0 L2267.4 1093.6 L2268.6 1096.2 L2269.8 1098.8 L2271.0 1101.3 L2272.2 1103.9 L2273.4 1106.5 L2274.6 1109.1 L2275.8 1111.6 L2277.0 1114.2 L2278.2 1116.7 L2279.4 1119.3 L2280.6 1121.8 L2281.8 1124.4 L2282.9 1126.9 L2284.1 1129.4 L2285.3 1131.9 L2286.5 1134.4 L2287.7 1136.9 L2288.9 1139.4 L2290.1 1141.9 L2291.3 1144.4 L2292.5 1146.9 L2293.7 1149.4 L2294.9 1151.8 L2296.1 1154.3 L2297.2 1156.7 L2298.4 1159.2 L2299.6 1161.6 L2300.8 1164.1 L2302.0 1166.5 L2303.2 1168.9 L2304.4 1171.3 L2305.6 1173.7 L2306.8 1176.1 L2308.0 1178.5 L2309.2 1180.8 L2310.4 1183.2 L2311.6 1185.6 L2312.7 1187.9 L2313.9 1190.3 L2315.1 1192.6 L2316.3 1194.9 L2317.5 1197.2 L2318.7 1199.6 L2319.9 1201.9 L2321.1 1204.1 L2322.3 1206.4 L2323.5 1208.7 L2324.7 1211.0 L2325.9 1213.2 L2327.0 1215.5 L2328.2 1217.7 L2329.4 1219.9 L2330.6 1222.1 L2331.8 1224.4 L2333.0 1226.5 L2334.2 1228.7 L2335.4 1230.9 L2336.6 1233.1 L2337.8 1235.2 L2339.0 1237.4 L2340.2 1239.5 L2341.4 1241.6 L2342.5 1243.8 L2343.7 1245.9 L2344.9 1248.0 L2346.1 1250.0 L2347.3 1252.1 L2348.5 1254.2 L2349.7 1256.2 L2350.9 1258.3 L2352.1 1260.3 L2353.3 1262.3 L2354.5 1264.3 L2355.7 1266.3 L2356.8 1268.3 L2358.0 1270.3 L2359.2 1272.2 L2360.4 1274.2 L2361.6 1276.1 L2362.8 1278.0 L2364.0 1280.0 L2365.2 1281.9 L2366.4 1283.8 L2367.6 1285.6 L2368.8 1287.5 L2370.0 1289.3 L2371.2 1291.2 L2372.3 1293.0 L2373.5 1294.8 L2374.7 1296.6 L2375.9 1298.4 L2377.1 1300.2 L2378.3 1302.0 L2379.5 1303.7 L2380.7 1305.5 L2381.9 1307.2 L2383.1 1308.9 L2384.3 1310.6 L2385.5 1312.3 L2386.6 1314.0 L2387.8 1315.6 L2389.0 1317.3 L2390.2 1318.9 L2391.4 1320.5 L2392.6 1322.1 L2393.8 1323.7 L2395.0 1325.3 L2396.2 1326.9 L2397.4 1328.4 L2398.6 1329.9 L2399.8 1331.5 L2401.0 1333.0 L2402.1 1334.5 L2403.3 1336.0 L2404.5 1337.4 L2405.7 1338.9 L2406.9 1340.3 L2408.1 1341.7 L2409.3 1343.1 L2410.5 1344.5 L2411.7 1345.9 L2412.9 1347.3 L2414.1 1348.6 L2415.3 1350.0 L2416.4 1351.3 L2417.6 1352.6 L2418.8 1353.9 L2420.0 1355.2 L2421.2 1356.4 L2422.4 1357.7 L2423.6 1358.9 L2424.8 1360.1 L2426.0 1361.3 L2427.2 1362.5 L2428.4 1363.7 L2429.6 1364.8 L2430.8 1366.0 L2431.9 1367.1 L2433.1 1368.2 L2434.3 1369.3 L2435.5 1370.4 L2436.7 1371.5 L2437.9 1372.5 L2439.1 1373.5 L2440.3 1374.6 L2441.5 1375.6 L2442.7 1376.5 L2443.9 1377.5 L2445.1 1378.5 L2446.2 1379.4 L2447.4 1380.3 L2448.6 1381.2 L2449.8 1382.1 L2451.0 1383.0 L2452.2 1383.8 L2453.4 1384.7 L2454.6 1385.5 L2455.8 1386.3 L2457.0 1387.1 L2458.2 1387.9 L2459.4 1388.7 L2460.6 1389.4 L2461.7 1390.1 L2462.9 1390.8 L2464.1 1391.5 L2465.3 1392.2 L2466.5 1392.9 L2467.7 1393.5 L2468.9 1394.2 L2470.1 1394.8 L2471.3 1395.4 L2472.5 1395.9 L2473.7 1396.5 L2474.9 1397.1 L2476.0 1397.6 L2477.2 1398.1 L2478.4 1398.6 L2479.6 1399.1 L2480.8 1399.5 L2482.0 1400.0 L2483.2 1400.4 L2484.4 1400.8 L2485.6 1401.2 L2486.8 1401.6 L2488.0 1402.0 L2489.2 1402.3 L2490.4 1402.6 L2491.5 1403.0 L2492.7 1403.3 L2493.9 1403.5 L2495.1 1403.8 L2496.3 1404.0 L2497.5 1404.3 L2498.7 1404.5 L2499.9 1404.7 L2501.1 1404.9 L2502.3 1405.0 L2503.5 1405.2 L2504.7 1405.3 L2505.8 1405.4 L2507.0 1405.5 L2508.2 1405.6 L2509.4 1405.6 L2510.6 1405.7 L2511.8 1405.7 L2513.0 1405.7 L2514.2 1405.7 L2515.4 1405.7 L2516.6 1405.6 L2517.8 1405.6 L2519.0 1405.5 L2520.2 1405.4 L2521.3 1405.3 L2522.5 1405.2 L2523.7 1405.0 L2524.9 1404.9 L2526.1 1404.7 L2527.3 1404.5 L2528.5 1404.3 L2529.7 1404.0 L2530.9 1403.8 L2532.1 1403.5 L2533.3 1403.3 L2534.5 1403.0 L2535.6 1402.6 L2536.8 1402.3 L2538.0 1402.0 L2539.2 1401.6 L2540.4 1401.2 L2541.6 1400.8 L2542.8 1400.4 L2544.0 1400.0 L2545.2 1399.5 L2546.4 1399.1 L2547.6 1398.6 L2548.8 1398.1 L2550.0 1397.6 L2551.1 1397.1 L2552.3 1396.5 L2553.5 1395.9 L2554.7 1395.4 L2555.9 1394.8 L2557.1 1394.2 L2558.3 1393.5 L2559.5 1392.9 L2560.7 1392.2 L2561.9 1391.5 L2563.1 1390.8 L2564.3 1390.1 L2565.4 1389.4 L2566.6 1388.7 L2567.8 1387.9 L2569.0 1387.1 L2570.2 1386.3 L2571.4 1385.5 L2572.6 1384.7 L2573.8 1383.8 L2575.0 1383.0 L2576.2 1382.1 L2577.4 1381.2 L2578.6 1380.3 L2579.8 1379.4 L2580.9 1378.5 L2582.1 1377.5 L2583.3 1376.5 L2584.5 1375.6 L2585.7 1374.6 L2586.9 1373.5 L2588.1 1372.5 L2589.3 1371.5 L2590.5 1370.4 L2591.7 1369.3 L2592.9 1368.2 L2594.1 1367.1 L2595.2 1366.0 L2596.4 1364.8 L2597.6 1363.7 L2598.8 1362.5 L2600.0 1361.3 L2601.2 1360.1 L2602.4 1358.9 L2603.6 1357.7 L2604.8 1356.4 L2606.0 1355.2 L2607.2 1353.9 L2608.4 1352.6 L2609.6 1351.3 L2610.7 1350.0 L2611.9 1348.6 L2613.1 1347.3 L2614.3 1345.9 L2615.5 1344.5 L2616.7 1343.1 L2617.9 1341.7 L2619.1 1340.3 L2620.3 1338.9 L2621.5 1337.4 L2622.7 1336.0 L2623.9 1334.5 L2625.0 1333.0 L2626.2 1331.5 L2627.4 1329.9 L2628.6 1328.4 L2629.8 1326.9 L2631.0 1325.3 L2632.2 1323.7 L2633.4 1322.1 L2634.6 1320.5 L2635.8 1318.9 L2637.0 1317.3 L2638.2 1315.6 L2639.4 1314.0 L2640.5 1312.3 L2641.7 1310.6 L2642.9 1308.9 L2644.1 1307.2 L2645.3 1305.5 L2646.5 1303.7 L2647.7 1302.0 L2648.9 1300.2 L2650.1 1298.4 L2651.3 1296.6 L2652.5 1294.8 L2653.7 1293.0 L2654.8 1291.2 L2656.0 1289.3 L2657.2 1287.5 L2658.4 1285.6 L2659.6 1283.8 L2660.8 1281.9 L2662.0 1280.0 L2663.2 1278.0 L2664.4 1276.1 L2665.6 1274.2 L2666.8 1272.2 L2668.0 1270.3 L2669.2 1268.3 L2670.3 1266.3 L2671.5 1264.3 L2672.7 1262.3 L2673.9 1260.3 L2675.1 1258.3 L2676.3 1256.2 L2677.5 1254.2 L2678.7 1252.1 L2679.9 1250.0 L2681.1 1248.0 L2682.3 1245.9 L2683.5 1243.8 L2684.6 1241.6 L2685.8 1239.5 L2687.0 1237.4 L2688.2 1235.2 L2689.4 1233.1 L2690.6 1230.9 L2691.8 1228.7 L2693.0 1226.5 L2694.2 1224.4 L2695.4 1222.1 L2696.6 1219.9 L2697.8 1217.7 L2699.0 1215.5 L2700.1 1213.2 L2701.3 1211.0 L2702.5 1208.7 L2703.7 1206.4 L2704.9 1204.1 L2706.1 1201.9 L2707.3 1199.6 L2708.5 1197.2 L2709.7 1194.9 L2710.9 1192.6 L2712.1 1190.3 L2713.3 1187.9 L2714.4 1185.6 L2715.6 1183.2 L2716.8 1180.8 L2718.0 1178.5 L2719.2 1176.1 L2720.4 1173.7 L2721.6 1171.3 L2722.8 1168.9 L2724.0 1166.5 L2725.2 1164.1 L2726.4 1161.6 L2727.6 1159.2 L2728.8 1156.7 L2729.9 1154.3 L2731.1 1151.8 L2732.3 1149.4 L2733.5 1146.9 L2734.7 1144.4 L2735.9 1141.9 L2737.1 1139.4 L2738.3 1136.9 L2739.5 1134.4 L2740.7 1131.9 L2741.9 1129.4 L2743.1 1126.9 L2744.2 1124.4 L2745.4 1121.8 L2746.6 1119.3 L2747.8 1116.7 L2749.0 1114.2 L2750.2 1111.6 L2751.4 1109.1 L2752.6 1106.5 L2753.8 1103.9 L2755.0 1101.3 L2756.2 1098.8 L2757.4 1096.2 L2758.6 1093.6 L2759.7 1091.0 L2760.9 1088.4 L2762.1 1085.8 L2763.3 1083.2 L2764.5 1080.5 L2765.7 1077.9 L2766.9 1075.3 L2768.1 1072.7 L2769.3 1070.0 L2770.5 1067.4 L2771.7 1064.8 L2772.9 1062.1 L2774.0 1059.5 L2775.2 1056.8 L2776.4 1054.2 L2777.6 1051.5 L2778.8 1048.9 L2780.0 1046.2 L2781.2 1043.6 L2782.4 1040.9 L2783.6 1038.2 L2784.8 1035.6 L2786.0 1032.9 L2787.2 1030.2 L2788.4 1027.5 L2789.5 1024.8 L2790.7 1022.2 L2791.9 1019.5 L2793.1 1016.8 L2794.3 1014.1 L2795.5 1011.4 L2796.7 1008.7 L2797.9 1006.0 L2799.1 1003.4 L2800.3 1000.7 L2801.5 998.0 L2802.7 995.3 L2803.8 992.6 L2805.0 989.9 L2806.2 987.2 L2807.4 984.5 L2808.6 981.8 L2809.8 979.1 L2811.0 976.4" fill="none" stroke="#00dc00" stroke-width="6.8" stroke-linejoin="round" shape-rendering="auto"/></svg>
<div class="t" style="left:339.00px;top:426.29px;font-size:28px;letter-spacing:-1.312px;color:#000;font-weight:normal;">7.5</div>
<div class="t" style="left:339.00px;top:604.29px;font-size:28px;letter-spacing:-1.312px;color:#000;font-weight:normal;">5.0</div>
<div class="t" style="left:339.00px;top:782.29px;font-size:28px;letter-spacing:-1.312px;color:#000;font-weight:normal;">2.5</div>
<div class="t" style="left:339.00px;top:962.29px;font-size:28px;letter-spacing:-1.312px;color:#000;font-weight:normal;">0.0</div>
<div class="t" style="left:336.50px;top:1140.29px;font-size:28px;letter-spacing:-0.438px;color:#000;font-weight:normal;">-2.5</div>
<div class="t" style="left:336.50px;top:1318.29px;font-size:28px;letter-spacing:-0.438px;color:#000;font-weight:normal;">-5.0</div>
<div class="t" style="left:336.50px;top:1498.29px;font-size:28px;letter-spacing:-0.438px;color:#000;font-weight:normal;">-7.5</div>
<div class="t" style="left:415.00px;top:1552.29px;font-size:28px;letter-spacing:-1.312px;color:#000;font-weight:normal;">0.0</div>
<div class="t" style="left:1008.85px;top:1552.29px;font-size:28px;letter-spacing:-1.213px;color:#000;font-weight:normal;">.25</div>
<div class="t" style="left:1611.00px;top:1552.29px;font-size:28px;letter-spacing:-2.180px;color:#000;font-weight:normal;">.5</div>
<div class="t" style="left:2196.85px;top:1552.29px;font-size:28px;letter-spacing:-1.213px;color:#000;font-weight:normal;">.75</div>
<div class="t" style="left:2792.85px;top:1552.29px;font-size:28px;letter-spacing:-2.213px;color:#000;font-weight:normal;">1.0</div>
<div class="t" style="left:1566.00px;top:1584.09px;font-size:28px;letter-spacing:0.233px;color:#000;font-weight:normal;">time (us)</div>
<div class="t" style="left:300.5px;top:1014px;font-size:30px;transform-origin:0 0;transform:rotate(-90deg);letter-spacing:1.2px">V (V)</div>
<div style="position:absolute;left:432px;top:374px;width:24px;height:47px;background:linear-gradient(#f4f4f4,#d8d8d8 60%,#e8e8e8);box-shadow:inset 0 0 0 1.5px #888;"></div>
<svg style="position:absolute;left:437px;top:389px;overflow:visible" width="14" height="16" viewBox="0 0 14 16"><path d="M12 1 L1 8 L12 15 Z" fill="#e00000"/></svg>
<div style="position:absolute;left:2784px;top:374px;width:24px;height:47px;background:linear-gradient(#f4f4f4,#d8d8d8 60%,#e8e8e8);box-shadow:inset 0 0 0 1.5px #888;"></div>
<svg style="position:absolute;left:2788px;top:389px;overflow:visible" width="14" height="16" viewBox="0 0 14 16"><path d="M1 1 L12 8 L1 15 Z" fill="#e00000"/></svg>
<div style="position:absolute;left:455px;top:368px;width:2329px;height:60px;background:linear-gradient(#d6dee8,#f8f8f8 15%,#c8ccd2 70%,#98a2ae);border-radius:8px;"></div>
<div style="position:absolute;left:479px;top:374px;width:2281px;height:47px;background:linear-gradient(#c0c0c0,#e0e0e0 20%,#ffffff 45%,#e4e4e4 75%,#c8c8c8);border-radius:6px;box-shadow:inset 0 0 0 1px #bbb;"></div>
<div style="position:absolute;left:466px;top:384px;width:2px;height:28px;background:#000"></div>
<div style="position:absolute;left:471px;top:384px;width:2px;height:28px;background:#000"></div>
<div style="position:absolute;left:2768px;top:384px;width:2px;height:28px;background:#000"></div>
<div style="position:absolute;left:2773px;top:384px;width:2px;height:28px;background:#000"></div>
<svg style="position:absolute;left:0;top:0" width="2880" height="440"><path d="M480.0 398.7 L490.3 398.7 L490.3 397.6 L513.0 397.6 L513.0 395.2 L535.8 395.2 L535.8 392.8 L558.6 392.8 L558.6 390.6 L581.4 390.6 L581.4 388.4 L604.2 388.4 L604.2 386.5 L627.0 386.5 L627.0 384.7 L649.8 384.7 L649.8 383.2 L672.6 383.2 L672.6 382.7 L695.4 382.7 L695.4 382.7 L718.2 382.7 L718.2 382.7 L740.9 382.7 L740.9 382.7 L763.7 382.7 L763.7 382.7 L786.5 382.7 L786.5 382.7 L809.3 382.7 L809.3 382.7 L832.1 382.7 L832.1 382.7 L854.9 382.7 L854.9 382.7 L877.7 382.7 L877.7 383.2 L900.5 383.2 L900.5 384.7 L923.3 384.7 L923.3 386.5 L946.1 386.5 L946.1 388.4 L968.8 388.4 L968.8 390.6 L991.6 390.6 L991.6 392.8 L1014.4 392.8 L1014.4 395.2 L1037.2 395.2 L1037.2 397.6 L1060.0 397.6 L1060.0 398.7 L1082.8 398.7 L1082.8 398.7 L1105.6 398.7 L1105.6 398.7 L1128.4 398.7 L1128.4 398.7 L1151.2 398.7 L1151.2 398.7 L1174.0 398.7 L1174.0 398.7 L1196.7 398.7 L1196.7 398.7 L1219.5 398.7 L1219.5 398.7 L1242.3 398.7 L1242.3 398.7 L1265.1 398.7 L1265.1 398.7 L1287.9 398.7 L1287.9 398.7 L1310.7 398.7 L1310.7 398.7 L1333.5 398.7 L1333.5 398.7 L1356.3 398.7 L1356.3 398.7 L1379.1 398.7 L1379.1 398.7 L1401.9 398.7 L1401.9 398.7 L1424.6 398.7 L1424.6 398.7 L1447.4 398.7 L1447.4 398.7 L1470.2 398.7 L1470.2 398.7 L1493.0 398.7 L1493.0 398.7 L1515.8 398.7 L1515.8 398.7 L1538.6 398.7 L1538.6 398.7 L1561.4 398.7 L1561.4 398.7 L1584.2 398.7 L1584.2 398.7 L1607.0 398.7 L1607.0 398.7 L1629.8 398.7 L1629.8 397.6 L1652.5 397.6 L1652.5 395.2 L1675.3 395.2 L1675.3 392.8 L1698.1 392.8 L1698.1 390.6 L1720.9 390.6 L1720.9 388.4 L1743.7 388.4 L1743.7 386.5 L1766.5 386.5 L1766.5 384.7 L1789.3 384.7 L1789.3 383.2 L1812.1 383.2 L1812.1 382.7 L1834.9 382.7 L1834.9 382.7 L1857.7 382.7 L1857.7 382.7 L1880.4 382.7 L1880.4 382.7 L1903.2 382.7 L1903.2 382.7 L1926.0 382.7 L1926.0 382.7 L1948.8 382.7 L1948.8 382.7 L1971.6 382.7 L1971.6 382.7 L1994.4 382.7 L1994.4 382.7 L2017.2 382.7 L2017.2 383.2 L2040.0 383.2 L2040.0 384.7 L2062.8 384.7 L2062.8 386.5 L2085.6 386.5 L2085.6 388.4 L2108.3 388.4 L2108.3 390.6 L2131.1 390.6 L2131.1 392.8 L2153.9 392.8 L2153.9 395.2 L2176.7 395.2 L2176.7 397.6 L2199.5 397.6 L2199.5 398.7 L2222.3 398.7 L2222.3 398.7 L2245.1 398.7 L2245.1 398.7 L2267.9 398.7 L2267.9 398.7 L2290.7 398.7 L2290.7 398.7 L2313.5 398.7 L2313.5 398.7 L2336.2 398.7 L2336.2 398.7 L2359.0 398.7 L2359.0 398.7 L2381.8 398.7 L2381.8 398.7 L2404.6 398.7 L2404.6 398.7 L2427.4 398.7 L2427.4 398.7 L2450.2 398.7 L2450.2 398.7 L2473.0 398.7 L2473.0 398.7 L2495.8 398.7 L2495.8 398.7 L2518.6 398.7 L2518.6 398.7 L2541.4 398.7 L2541.4 398.7 L2564.1 398.7 L2564.1 398.7 L2586.9 398.7 L2586.9 398.7 L2609.7 398.7 L2609.7 398.7 L2632.5 398.7 L2632.5 398.7 L2655.3 398.7 L2655.3 398.7 L2678.1 398.7 L2678.1 398.7 L2700.9 398.7 L2700.9 398.7 L2723.7 398.7 L2723.7 398.7 L2746.5 398.7 L2746.5 398.7 L2759.0 398.7" fill="none" stroke="#c0361a" stroke-width="2.2"/><rect x="496.4" y="395.6" width="5" height="2.4" fill="#000"/><rect x="515.3" y="393.6" width="5" height="2.4" fill="#000"/><rect x="534.8" y="391.6" width="5" height="2.4" fill="#000"/><rect x="555.0" y="389.6" width="5" height="2.4" fill="#000"/><rect x="576.2" y="387.6" width="5" height="2.4" fill="#000"/><rect x="599.1" y="385.6" width="5" height="2.4" fill="#000"/><rect x="624.5" y="383.6" width="5" height="2.4" fill="#000"/><rect x="654.6" y="381.6" width="5" height="2.4" fill="#000"/><rect x="695.0" y="379.6" width="5" height="2.4" fill="#000"/><rect x="829.8" y="379.6" width="5" height="2.4" fill="#000"/><rect x="870.3" y="381.6" width="5" height="2.4" fill="#000"/><rect x="900.4" y="383.6" width="5" height="2.4" fill="#000"/><rect x="925.8" y="385.6" width="5" height="2.4" fill="#000"/><rect x="948.7" y="387.6" width="5" height="2.4" fill="#000"/><rect x="969.9" y="389.6" width="5" height="2.4" fill="#000"/><rect x="990.0" y="391.6" width="5" height="2.4" fill="#000"/><rect x="1009.5" y="393.6" width="5" height="2.4" fill="#000"/><rect x="1028.4" y="395.6" width="5" height="2.4" fill="#000"/><rect x="1047.4" y="397.6" width="5" height="2.4" fill="#000"/><rect x="1066.2" y="399.6" width="5" height="2.4" fill="#000"/><rect x="1085.1" y="401.6" width="5" height="2.4" fill="#000"/><rect x="1104.6" y="403.6" width="5" height="2.4" fill="#000"/><rect x="1124.7" y="405.6" width="5" height="2.4" fill="#000"/><rect x="1145.9" y="407.6" width="5" height="2.4" fill="#000"/><rect x="1168.8" y="409.6" width="5" height="2.4" fill="#000"/><rect x="1194.2" y="411.6" width="5" height="2.4" fill="#000"/><rect x="1224.3" y="413.6" width="5" height="2.4" fill="#000"/><rect x="1264.8" y="415.6" width="5" height="2.4" fill="#000"/><rect x="1399.6" y="415.6" width="5" height="2.4" fill="#000"/><rect x="1440.0" y="413.6" width="5" height="2.4" fill="#000"/><rect x="1470.1" y="411.6" width="5" height="2.4" fill="#000"/><rect x="1495.5" y="409.6" width="5" height="2.4" fill="#000"/><rect x="1518.4" y="407.6" width="5" height="2.4" fill="#000"/><rect x="1539.6" y="405.6" width="5" height="2.4" fill="#000"/><rect x="1559.8" y="403.6" width="5" height="2.4" fill="#000"/><rect x="1579.3" y="401.6" width="5" height="2.4" fill="#000"/><rect x="1598.2" y="399.6" width="5" height="2.4" fill="#000"/><rect x="1617.1" y="397.6" width="5" height="2.4" fill="#000"/><rect x="1635.9" y="395.6" width="5" height="2.4" fill="#000"/><rect x="1654.8" y="393.6" width="5" height="2.4" fill="#000"/><rect x="1674.3" y="391.6" width="5" height="2.4" fill="#000"/><rect x="1694.5" y="389.6" width="5" height="2.4" fill="#000"/><rect x="1715.7" y="387.6" width="5" height="2.4" fill="#000"/><rect x="1738.6" y="385.6" width="5" height="2.4" fill="#000"/><rect x="1764.0" y="383.6" width="5" height="2.4" fill="#000"/><rect x="1794.1" y="381.6" width="5" height="2.4" fill="#000"/><rect x="1834.5" y="379.6" width="5" height="2.4" fill="#000"/><rect x="1969.3" y="379.6" width="5" height="2.4" fill="#000"/><rect x="2009.8" y="381.6" width="5" height="2.4" fill="#000"/><rect x="2039.9" y="383.6" width="5" height="2.4" fill="#000"/><rect x="2065.3" y="385.6" width="5" height="2.4" fill="#000"/><rect x="2088.2" y="387.6" width="5" height="2.4" fill="#000"/><rect x="2109.4" y="389.6" width="5" height="2.4" fill="#000"/><rect x="2129.5" y="391.6" width="5" height="2.4" fill="#000"/><rect x="2149.0" y="393.6" width="5" height="2.4" fill="#000"/><rect x="2167.9" y="395.6" width="5" height="2.4" fill="#000"/><rect x="2186.9" y="397.6" width="5" height="2.4" fill="#000"/><rect x="2205.7" y="399.6" width="5" height="2.4" fill="#000"/><rect x="2224.6" y="401.6" width="5" height="2.4" fill="#000"/><rect x="2244.1" y="403.6" width="5" height="2.4" fill="#000"/><rect x="2264.2" y="405.6" width="5" height="2.4" fill="#000"/><rect x="2285.4" y="407.6" width="5" height="2.4" fill="#000"/><rect x="2308.3" y="409.6" width="5" height="2.4" fill="#000"/><rect x="2333.7" y="411.6" width="5" height="2.4" fill="#000"/><rect x="2363.8" y="413.6" width="5" height="2.4" fill="#000"/><rect x="2404.3" y="415.6" width="5" height="2.4" fill="#000"/><rect x="2539.1" y="415.6" width="5" height="2.4" fill="#000"/><rect x="2579.5" y="413.6" width="5" height="2.4" fill="#000"/><rect x="2609.6" y="411.6" width="5" height="2.4" fill="#000"/><rect x="2635.0" y="409.6" width="5" height="2.4" fill="#000"/><rect x="2657.9" y="407.6" width="5" height="2.4" fill="#000"/><rect x="2679.1" y="405.6" width="5" height="2.4" fill="#000"/><rect x="2699.3" y="403.6" width="5" height="2.4" fill="#000"/><rect x="2718.8" y="401.6" width="5" height="2.4" fill="#000"/><rect x="2737.7" y="399.6" width="5" height="2.4" fill="#000"/></svg>
<div style="position:absolute;left:0px;top:1636px;width:2876px;height:38px;background:linear-gradient(#e8e8e8,#d0d0d0 50%,#b6b6b6);border-radius:4px 0 0 0;"></div>
<div style="position:absolute;left:0px;top:1674px;width:2880px;height:2px;background:#8a8a8a"></div>
<div style="position:absolute;left:0px;top:1676px;width:2880px;height:1px;background:#fafafa"></div>
<div style="position:absolute;left:0px;top:1677px;width:2880px;height:41px;background:#efefef"></div>
<div style="position:absolute;left:0px;top:1718px;width:2880px;height:2px;background:#555"></div>
<div style="position:absolute;left:14.0px;top:1650px;width:1.6px;height:13px;background:#888"></div>
<div style="position:absolute;left:17.5px;top:1650px;width:1.6px;height:13px;background:#888"></div>
<div style="position:absolute;left:21.0px;top:1650px;width:1.6px;height:13px;background:#888"></div>
<div class="t" style="left:30.00px;top:1642.96px;font-size:24.5px;letter-spacing:-0.598px;color:#333;font-weight:normal;">mouse L:</div>
<div class="t" style="left:1431.80px;top:1643.16px;font-size:24.5px;letter-spacing:-1.309px;color:#333;font-weight:normal;">M:</div>
<div class="t" style="left:2837.00px;top:1643.06px;font-size:24.5px;letter-spacing:-2.750px;color:#333;font-weight:normal;">R:</div>
<div style="position:absolute;left:2px;top:1678px;width:58px;height:40px;background:#f5d8da"></div>
<div style="position:absolute;left:60px;top:1678px;width:2px;height:40px;background:#555"></div>
<div class="t" style="left:6.00px;top:1684.76px;font-size:24.5px;letter-spacing:-0.895px;color:#333;font-weight:normal;">2(5)</div>
<div class="t" style="left:81.00px;top:1684.76px;font-size:24.5px;letter-spacing:-0.895px;color:#333;font-weight:normal;">Undo</div>
<div class="t" style="left:203.00px;top:1684.76px;font-size:24.5px;letter-spacing:0.000px;color:#333;font-weight:normal;">U</div>
<div style="position:absolute;left:2861px;top:1682px;width:15px;height:33px;background:#9c9ca4;box-shadow:inset -2px -2px 0 #555"></div>
</body></html>
